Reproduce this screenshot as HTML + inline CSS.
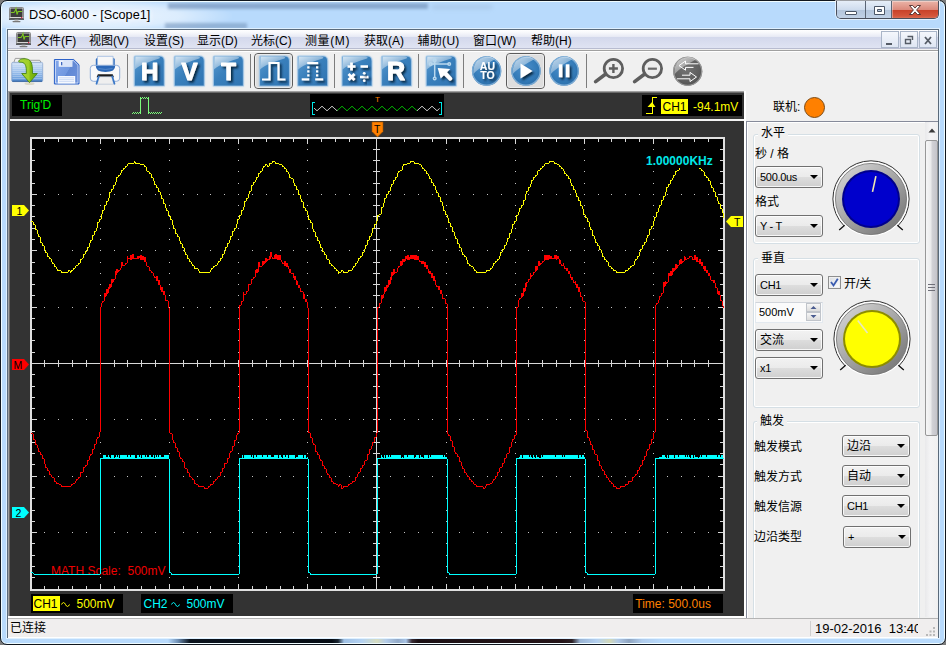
<!DOCTYPE html>
<html lang="zh-CN">
<head>
<meta charset="utf-8">
<title>DSO-6000 - [Scope1]</title>
<style>
html,body{margin:0;padding:0;}
body{width:946px;height:645px;overflow:hidden;position:relative;background:#7c7c7c;font-family:"Liberation Sans","Noto Sans CJK SC",sans-serif;font-size:12px;color:#000;}
.abs{position:absolute;}
#win{position:absolute;left:0;top:0;width:944px;height:643px;border:1px solid #10161e;border-radius:7px;background:#b8dafc;box-shadow:inset 0 0 0 1px #f0fcff;}
#title{left:29px;top:6px;font-size:12.700px;line-height:18px;color:#000;white-space:nowrap;text-shadow:0 0 6px #fff,0 0 6px #fff;}
#client{left:8px;top:30px;width:930px;height:607px;background:#f0f0f0;box-shadow:0 0 0 1px #5a6a7a,0 0 0 2px #dff0ff;}
/* menu */
#menubar{left:8px;top:30px;width:930px;height:19px;background:linear-gradient(#ffffff 0,#f6f7fb 3px,#e6e9f4 7px,#d3d8ec 7px,#dfe3f2 18px,#b8bcd0 18px,#b8bcd0 19px);border-bottom:1px solid #f0f0f0;box-shadow:0 1px 0 #a0a0a0,0 2px 0 #fff;}
.mi{position:absolute;top:32.500px;font-size:12px;line-height:16px;white-space:nowrap;color:#000;}
.mdib{top:31px;width:16px;height:15px;border:1px solid #a9b5c8;background:linear-gradient(#f4f7fc,#dfe6f3);}
/* toolbar */
#toolbar{left:8px;top:52px;width:930px;height:39px;background:#f0f0f0;}
.tsep{position:absolute;top:56px;width:1px;height:30px;background:#9a9a9a;}
/* scope */
#scope{left:8px;top:91px;width:736px;height:525px;background:#333333;border-left:1px solid #a0a0a0;border-top:1px solid #a0a0a0;box-sizing:border-box;box-shadow:inset 1px 1px 0 #696969;}
.blk{position:absolute;background:#000;}
.st{position:absolute;font-size:12px;line-height:14px;white-space:nowrap;}
/* right panel */
#rp{left:746px;top:91px;width:192px;height:527px;background:#f0f0f0;}
.cj{position:absolute;font-family:"Liberation Sans","Noto Sans CJK SC",sans-serif;font-size:12px;line-height:14px;white-space:nowrap;color:#000;}
.grp{position:absolute;border:1px solid #d5dfe5;border-radius:3px;box-shadow:inset 0 0 0 1px #fff;}
.combo{position:absolute;width:66px;height:20px;border:1px solid #707070;border-radius:3px;background:linear-gradient(#f2f2f2 0,#ebebeb 48%,#dddddd 52%,#cfcfcf 100%);box-shadow:inset 0 0 0 1px rgba(255,255,255,.8);font-size:11px;line-height:20px;letter-spacing:-0.3px;}
.cjc{font-size:12px;letter-spacing:0;}
.combo span{position:absolute;left:4px;top:0;white-space:nowrap;}
.combo i{position:absolute;right:4px;top:8px;width:0;height:0;border-left:4px solid transparent;border-right:4px solid transparent;border-top:4px solid #000;}
/* status */
#status{left:8px;top:618px;width:930px;height:18px;background:#f0eeee;border-top:1px solid #b4b4b4;box-shadow:0 1px 0 #fff;}
</style>
</head>
<body>
<div id="win"></div>
<div class="abs" style="left:2px;top:2px;width:942px;height:26px;overflow:hidden;border-radius:5px 5px 0 0">
<div class="abs" style="left:-10px;top:-4px;width:240px;height:36px;background:radial-gradient(ellipse at 40% 50%,rgba(255,255,255,.78) 0,rgba(255,255,255,.5) 45%,rgba(255,255,255,0) 72%)"></div>
<div class="abs" style="left:166px;top:1px;width:260px;height:6px;background:#6a88b0;opacity:.6;filter:blur(1.800px)"></div>
<div class="abs" style="left:163px;top:21px;width:82px;height:6px;background:#6a88b0;opacity:.5;filter:blur(1.800px)"></div>
<div class="abs" style="left:430px;top:3px;width:60px;height:4px;background:#8fa8c8;opacity:.35;filter:blur(2px)"></div>
</div>
<div class="abs" style="left:2px;top:638px;width:942px;height:5px;overflow:hidden;border-radius:0 0 5px 5px;background:linear-gradient(90deg,#b8dafc 0,#b8dafc 166px,#6f8fb4 176px,#0c141e 188px,#060c14 330px,#1a2632 336px,#9fc0e4 342px,#b4d2f2 360px,#d6dcc0 375px,#b4cce8 384px,#93aac8 396px,#a8c4e6 404px,#3a2c34 410px,#1c1014 416px,#241418 560px,#2c2024 570px,#9ab4d4 578px,#b4d0f0 595px,#d2d8b8 608px,#b0c8e6 616px,#8ea4c0 627px,#b0ccec 640px,#b8dafc 660px,#b8dafc 100%)"></div>
<div class="abs" style="left:8px;top:643px;width:930px;height:1px;background:#f0fcff"></div>
<svg class="abs" style="left:9px;top:6px" width="16" height="18" viewBox="0 0 16 18">
<rect x="0.5" y="1.5" width="14" height="11" rx="1" fill="#d8d8d8" stroke="#8a8a8a"/>
<rect x="1.5" y="2.5" width="12" height="8.5" fill="#3c3c3c"/>
<path d="M2 6.5h3l1-1.5 1-2.5 1 6 1-3h4" fill="none" stroke="#7cc520" stroke-width="1.1"/>
<rect x="0" y="12.5" width="15" height="1.2" fill="#222"/>
<rect x="12" y="11" width="1.3" height="1.3" fill="#e03050"/>
<rect x="5.5" y="13.7" width="4" height="1.5" fill="#bbb"/>
<rect x="3.5" y="15" width="8" height="1.2" rx="0.6" fill="#777"/>
</svg>
<div class="abs" style="left:836px;top:1px;width:103px;height:18px;border:1px solid #4a4f5c;border-top:none;border-radius:0 0 5px 5px;box-sizing:border-box;overflow:hidden;box-shadow:0 0 0 1px rgba(255,255,255,.6)">
 <div class="abs" style="left:0;top:0;width:28px;height:19px;background:linear-gradient(#e6eef8 0,#cfdced 45%,#b4c6dd 50%,#c4d4e8 100%);border-right:1px solid #5a6574"></div>
 <div class="abs" style="left:29px;top:0;width:25px;height:19px;background:linear-gradient(#e6eef8 0,#cfdced 45%,#b4c6dd 50%,#c4d4e8 100%);border-right:1px solid #5a6574"></div>
 <div class="abs" style="left:55px;top:0;width:48px;height:19px;box-shadow:inset 0 0 0 1px rgba(255,255,255,.35);background:linear-gradient(#eab4a8 0,#dc8a7c 45%,#c9432a 50%,#d4563c 80%,#e08a70 100%)"></div>
 <svg class="abs" style="left:0;top:0" width="102" height="19" viewBox="0 0 102 19">
  <rect x="8.5" y="10.5" width="11" height="3" rx="0.5" fill="#fff" stroke="#4a5566"/>
  <path d="M37.5 5.500h10v8h-10z M40.5 8.500h4v2h-4z" fill="#fff" stroke="#4a5566" fill-rule="evenodd"/>
  <path d="M72.500 4.500l3.200 0 2.300 2.600 2.300-2.600 3.200 0-3.900 4.500 3.900 4.500-3.200 0-2.300-2.600-2.300 2.600-3.200 0 3.900-4.500z" fill="#fff" stroke="#4a2a28" stroke-width="0.9"/>
 </svg>
</div>

<div id="title" class="abs">DSO-6000 - [Scope1]</div>
<div id="client" class="abs"></div>
<div id="menubar" class="abs"></div>
<svg class="abs" style="left:16px;top:31px" width="16" height="18" viewBox="0 0 16 18">
<rect x="0.500" y="1.500" width="14" height="11" rx="1" fill="#d8d8d8" stroke="#8a8a8a"/>
<rect x="1.500" y="2.500" width="12" height="8.500" fill="#3c3c3c"/>
<path d="M2 6.500h3l1-1.500 1-2.500 1 6 1-3h4" fill="none" stroke="#7cc520" stroke-width="1.100"/>
<rect x="0" y="12.500" width="15" height="1.200" fill="#222"/>
<rect x="12" y="11" width="1.300" height="1.300" fill="#e03050"/>
<rect x="5.500" y="13.700" width="4" height="1.500" fill="#bbb"/>
<rect x="3.500" y="15" width="8" height="1.200" rx="0.600" fill="#777"/>
</svg>
<div class="mi" style="left:37px">文件(F)</div>
<div class="mi" style="left:89px">视图(V)</div>
<div class="mi" style="left:144px">设置(S)</div>
<div class="mi" style="left:197px">显示(D)</div>
<div class="mi" style="left:251px">光标(C)</div>
<div class="mi" style="left:305px;letter-spacing:.6px">测量(M)</div>
<div class="mi" style="left:364px">获取(A)</div>
<div class="mi" style="left:417.500px;letter-spacing:.3px">辅助(U)</div>
<div class="mi" style="left:473px">窗口(W)</div>
<div class="mi" style="left:531px">帮助(H)</div>
<div class="abs mdib" style="left:881px"></div>
<div class="abs mdib" style="left:900px"></div>
<div class="abs mdib" style="left:919px"></div>
<svg class="abs" style="left:881px;top:31px" width="56" height="18" viewBox="0 0 56 18">
 <rect x="5" y="12" width="6" height="2" fill="#555c66"/>
 <path d="M26.500 5.500h5v3.500 M24.500 8.500h5v4h-5z" fill="none" stroke="#555c66" stroke-width="1.400"/>
 <path d="M44 6l6 7M50 6l-6 7" stroke="#555c66" stroke-width="1.800"/>
</svg>

<div id="toolbar" class="abs"></div>
<svg class="abs" style="left:8px;top:51px" width="930" height="41" viewBox="8 51 930 41">
<defs>
<linearGradient id="gb" x1="0" y1="0" x2="1" y2="1"><stop offset="0" stop-color="#5a9bd1"/><stop offset=".45" stop-color="#3a80bc"/><stop offset="1" stop-color="#2f74b2"/></linearGradient>
<linearGradient id="gg" x1="0" y1="0" x2=".8" y2="1"><stop offset="0" stop-color="#fff" stop-opacity=".75"/><stop offset="1" stop-color="#fff" stop-opacity=".12"/></linearGradient>
<radialGradient id="gc" cx=".45" cy=".4" r=".65"><stop offset="0" stop-color="#4a90cc"/><stop offset=".7" stop-color="#3279b6"/><stop offset="1" stop-color="#2b6ca6"/></radialGradient>
<radialGradient id="gcg" cx=".45" cy=".4" r=".65"><stop offset="0" stop-color="#747474"/><stop offset=".7" stop-color="#5e5e5e"/><stop offset="1" stop-color="#4e4e4e"/></radialGradient>
<filter id="bl1" x="-20%" y="-20%" width="140%" height="140%"><feGaussianBlur stdDeviation="1"/></filter>
<filter id="ds" x="-30%" y="-30%" width="170%" height="170%"><feDropShadow dx="1.9" dy="2.1" stdDeviation="1.2" flood-color="#061a36" flood-opacity=".9"/></filter>
<linearGradient id="gfold" x1="0" y1="0" x2="0" y2="1"><stop offset="0" stop-color="#d2e2f6"/><stop offset=".5" stop-color="#9cc0ec"/><stop offset="1" stop-color="#5a92d6"/></linearGradient>
<linearGradient id="garr" x1="0" y1="0" x2="1" y2="0"><stop offset="0" stop-color="#a8d438"/><stop offset=".55" stop-color="#a0d028"/><stop offset=".62" stop-color="#86bc10"/><stop offset="1" stop-color="#64a408"/></linearGradient>
<linearGradient id="gflop" x1="0" y1="0" x2="1" y2=".6"><stop offset="0" stop-color="#86a8ea"/><stop offset=".6" stop-color="#7098e0"/><stop offset=".62" stop-color="#6088d4"/><stop offset="1" stop-color="#6a90da"/></linearGradient>
</defs>
<g>
<path d="M13.800 62.500L15.300 58.400H24.800L25.800 60.300H39.800L41 62.500Z" fill="#f3f3f3" stroke="#8a8a8a" stroke-width=".8"/>
<rect x="11.700" y="62.300" width="31" height="19.300" rx="1.300" fill="url(#gfold)" stroke="#86a4cc" stroke-width=".7"/>
<path d="M12.500 64.500h29.400M12.500 66.500h29.400M12.500 68.500h29.400M12.500 70.500h29.400M12.500 72.500h29.400M12.500 74.500h29.400M12.500 76.500h29.400M12.500 78.500h29.400" stroke="#e4eefb" stroke-width=".6" opacity=".55"/>
<path d="M12.300 81.200h29.800" stroke="#2c5c9c" stroke-width="1.100"/>
<ellipse cx="29.500" cy="83.500" rx="5" ry="1.600" fill="#c8c4a8" opacity=".55"/>
<path d="M18.600 61.300C19 59.300 22 58.500 25 58.700C31.200 59.100 32.700 63 32.500 73.500L37.300 73.500L29.500 82.600L21.700 73.500L26.300 73.500C26.600 66.500 25.600 62.700 21.500 62.300C20 62.100 18.500 62.400 18.600 61.300Z" fill="url(#garr)" stroke="#3f7f0a" stroke-width=".8" stroke-linejoin="round"/>
</g>
<g>
<path d="M54.400 59.500h19.300l5.300 5.300v19.200h-24.600z" fill="url(#gflop)" stroke="#2d62c8" stroke-width="1"/>
<path d="M55.500 60.500h17.800l4.700 4.700v17.800h-22.500z" fill="none" stroke="#dfe9fb" stroke-width=".8" opacity=".9"/>
<path d="M58.700 60.200h13.600v6.600h-13.600z" fill="#eef3fc"/>
<path d="M64 60.200h8.300v6.600h-12z" fill="#d5e1f8" opacity=".8"/>
<path d="M61 62h1.300v3.300h-1.300z" fill="#3f68c0"/>
<path d="M57.900 76h17.300v7.400h-17.300z" fill="#f6f9fe"/>
<path d="M59 77.800h15M59 79.600h15M59 81.400h15" stroke="#c3d4f2" stroke-width=".8"/>
</g>
<g>
<path d="M95.800 59.500q0-1.500 1.500-1.500h16q1.500 0 1.500 1.500v7h-19z" fill="#3570c0"/>
<path d="M97.500 56.300h15.600v9.800h-15.600z" fill="#f7f7f7" stroke="#9ab8e0" stroke-width=".8"/>
<rect x="90.300" y="65.300" width="29.400" height="16" rx="3.200" fill="#f9f9fa" stroke="#86a6d6" stroke-width=".9"/>
<path d="M95.800 65.800h19.400q.3 6.200-9.700 6.200t-9.700-6.200z" fill="#2c68b8"/>
<path d="M98.500 68.600q7 1.600 14 0" fill="none" stroke="#6a98d4" stroke-width="1" opacity=".7"/>
<path d="M96.600 77.200l1.300-2.900h14.800l1.300 2.900z" fill="#1c1c1c"/>
<path d="M99.300 76.700h12.400l2 7.500h-16.400z" fill="#efefef" stroke="#aab8d0" stroke-width=".6"/>
<path d="M98.800 76.300l-2.300 7.500M112.200 76.300l2.300 7.500" stroke="#3a78c8" stroke-width="1.700" stroke-linecap="round"/>
</g>
<rect x="127" y="54" width="1" height="34" fill="#7d7d7d"/>
<path d="M135.3 56H159.3Q164.3 56 164.3 61V86H134.3V57Q134.3 56 135.3 56Z" fill="#9dc3e4" filter="url(#bl1)"/><path d="M135.3 56H159.3Q164.3 56 164.3 61V86H134.3V57Q134.3 56 135.3 56Z" fill="url(#gb)"/><path d="M135.3 56H159.3Q164.3 56 164.3 61V86H134.3V57Q134.3 56 135.3 56Z" fill="none" stroke="#a9cbe8" stroke-width="1.2" opacity=".75"/><path d="M135.3 56.5H157.3Q161.3 57 159.3 58.5C151.3 61 141.3 64 134.8 69.5Z" fill="url(#gg)"/>
<text x="149.60000000000002" y="79.5" font-size="24" font-weight="bold" text-anchor="middle" fill="#fff" stroke="#fff" stroke-width="1" stroke-linejoin="round" filter="url(#ds)" font-family="Liberation Sans, sans-serif">H</text>
<path d="M175.3 56H199.3Q204.3 56 204.3 61V86H174.3V57Q174.3 56 175.3 56Z" fill="#9dc3e4" filter="url(#bl1)"/><path d="M175.3 56H199.3Q204.3 56 204.3 61V86H174.3V57Q174.3 56 175.3 56Z" fill="url(#gb)"/><path d="M175.3 56H199.3Q204.3 56 204.3 61V86H174.3V57Q174.3 56 175.3 56Z" fill="none" stroke="#a9cbe8" stroke-width="1.2" opacity=".75"/><path d="M175.3 56.5H197.3Q201.3 57 199.3 58.5C191.3 61 181.3 64 174.8 69.5Z" fill="url(#gg)"/>
<text x="189.60000000000002" y="79.5" font-size="24" font-weight="bold" text-anchor="middle" fill="#fff" stroke="#fff" stroke-width="1" stroke-linejoin="round" filter="url(#ds)" font-family="Liberation Sans, sans-serif">V</text>
<path d="M214.4 56H238.4Q243.4 56 243.4 61V86H213.4V57Q213.4 56 214.4 56Z" fill="#9dc3e4" filter="url(#bl1)"/><path d="M214.4 56H238.4Q243.4 56 243.4 61V86H213.4V57Q213.4 56 214.4 56Z" fill="url(#gb)"/><path d="M214.4 56H238.4Q243.4 56 243.4 61V86H213.4V57Q213.4 56 214.4 56Z" fill="none" stroke="#a9cbe8" stroke-width="1.2" opacity=".75"/><path d="M214.4 56.5H236.4Q240.4 57 238.4 58.5C230.4 61 220.4 64 213.9 69.5Z" fill="url(#gg)"/>
<text x="228.70000000000002" y="79.5" font-size="24" font-weight="bold" text-anchor="middle" fill="#fff" stroke="#fff" stroke-width="1" stroke-linejoin="round" filter="url(#ds)" font-family="Liberation Sans, sans-serif">T</text>
<rect x="250" y="54" width="1" height="34" fill="#7d7d7d"/>
<rect x="254.5" y="53.5" width="38" height="35" rx="3.5" fill="#dedede" stroke="#5c5c5c"/><rect x="255.5" y="54.5" width="36" height="33" rx="2.5" fill="none" stroke="#f4f4f4" opacity=".7"/>
<path d="M260.5 56H284.5Q289.5 56 289.5 61V86H259.5V57Q259.5 56 260.5 56Z" fill="#9dc3e4" filter="url(#bl1)"/><path d="M260.5 56H284.5Q289.5 56 289.5 61V86H259.5V57Q259.5 56 260.5 56Z" fill="url(#gb)"/><path d="M260.5 56H284.5Q289.5 56 289.5 61V86H259.5V57Q259.5 56 260.5 56Z" fill="none" stroke="#a9cbe8" stroke-width="1.2" opacity=".75"/><path d="M260.5 56.5H282.5Q286.5 57 284.5 58.5C276.5 61 266.5 64 260.0 69.5Z" fill="url(#gg)"/>
<path d="M262.0 79.5h7.500v-16.500h9v16.500h7" fill="none" stroke="#fff" stroke-width="2.200" filter="url(#ds)"/>
<path d="M298.7 56H322.7Q327.7 56 327.7 61V86H297.7V57Q297.7 56 298.7 56Z" fill="#9dc3e4" filter="url(#bl1)"/><path d="M298.7 56H322.7Q327.7 56 327.7 61V86H297.7V57Q297.7 56 298.7 56Z" fill="url(#gb)"/><path d="M298.7 56H322.7Q327.7 56 327.7 61V86H297.7V57Q297.7 56 298.7 56Z" fill="none" stroke="#a9cbe8" stroke-width="1.2" opacity=".75"/><path d="M298.7 56.5H320.7Q324.7 57 322.7 58.5C314.7 61 304.7 64 298.2 69.5Z" fill="url(#gg)"/>
<g filter="url(#ds)" fill="#fff"><rect x="307.2" y="62" width="11" height="2.200"/><rect x="301.7" y="78.300" width="7.500" height="2.200"/><rect x="315.2" y="78.300" width="8" height="2.200"/><rect x="307.2" y="66.3" width="2.200" height="2.200"/><rect x="316.0" y="66.3" width="2.200" height="2.200"/><rect x="307.2" y="70.3" width="2.200" height="2.200"/><rect x="316.0" y="70.3" width="2.200" height="2.200"/><rect x="307.2" y="74.3" width="2.200" height="2.200"/><rect x="316.0" y="74.3" width="2.200" height="2.200"/></g>
<rect x="334" y="54" width="1" height="34" fill="#7d7d7d"/>
<path d="M343 56H367Q372 56 372 61V86H342V57Q342 56 343 56Z" fill="#9dc3e4" filter="url(#bl1)"/><path d="M343 56H367Q372 56 372 61V86H342V57Q342 56 343 56Z" fill="url(#gb)"/><path d="M343 56H367Q372 56 372 61V86H342V57Q342 56 343 56Z" fill="none" stroke="#a9cbe8" stroke-width="1.2" opacity=".75"/><path d="M343 56.5H365Q369 57 367 58.5C359 61 349 64 342.5 69.5Z" fill="url(#gg)"/>
<g filter="url(#ds)" stroke="#fff" stroke-width="2.700" fill="#fff"><path d="M347.5 66.500h8M351.5 62.500v8M360.5 66.500h7.500M348.5 74l6 6M354.5 74l-6 6M360 77h8.500"/></g><g filter="url(#ds)" fill="#fff"><circle cx="364.2" cy="73.300" r="1.400"/><circle cx="364.2" cy="80.700" r="1.400"/></g>
<path d="M382.5 56H406.5Q411.5 56 411.5 61V86H381.5V57Q381.5 56 382.5 56Z" fill="#9dc3e4" filter="url(#bl1)"/><path d="M382.5 56H406.5Q411.5 56 411.5 61V86H381.5V57Q381.5 56 382.5 56Z" fill="url(#gb)"/><path d="M382.5 56H406.5Q411.5 56 411.5 61V86H381.5V57Q381.5 56 382.5 56Z" fill="none" stroke="#a9cbe8" stroke-width="1.2" opacity=".75"/><path d="M382.5 56.5H404.5Q408.5 57 406.5 58.5C398.5 61 388.5 64 382.0 69.5Z" fill="url(#gg)"/>
<text x="396.1" y="80" font-size="25" font-weight="bold" text-anchor="middle" fill="#fff" stroke="#fff" stroke-width="1" stroke-linejoin="round" filter="url(#ds)" font-family="Liberation Sans, sans-serif">R</text>
<rect x="418" y="54" width="1" height="34" fill="#7d7d7d"/>
<path d="M427.2 56H451.2Q456.2 56 456.2 61V86H426.2V57Q426.2 56 427.2 56Z" fill="#9dc3e4" filter="url(#bl1)"/><path d="M427.2 56H451.2Q456.2 56 456.2 61V86H426.2V57Q426.2 56 427.2 56Z" fill="url(#gb)"/><path d="M427.2 56H451.2Q456.2 56 456.2 61V86H426.2V57Q426.2 56 427.2 56Z" fill="none" stroke="#a9cbe8" stroke-width="1.2" opacity=".75"/><path d="M427.2 56.5H449.2Q453.2 57 451.2 58.5C443.2 61 433.2 64 426.7 69.5Z" fill="url(#gg)"/>
<g fill="none" stroke="#b9d8ee" stroke-width="1.500"><path d="M434.7 60.500v17.500M431.2 64h17.500"/><circle cx="434.7" cy="60.300" r="1.300"/><circle cx="434.7" cy="78.500" r="1.300"/><circle cx="430.5" cy="64" r="1.300"/><circle cx="449.2" cy="64" r="1.300"/></g>
<path d="M437.7 68l12.500 1-3.200 3.200 5 5.500q.8 1.200-.4 2.400t-2.400 .400l-5.200-5.300-3.300 3.300z" fill="#fff" filter="url(#ds)"/>
<rect x="463" y="54" width="1" height="34" fill="#7d7d7d"/>
<circle cx="486.6" cy="71" r="14.7" fill="url(#gc)"/><circle cx="486.6" cy="71" r="14.1" fill="none" stroke="#8db9de" stroke-width="1.2" opacity=".8"/><path d="M473.40000000000003 70A13.7 13.7 0 0 1 494.685 59.24C488.6 62.915 478.51500000000004 68 473.40000000000003 74Z" fill="url(#gg)"/>
<g filter="url(#ds)" font-family="Liberation Sans, sans-serif" font-weight="bold" font-size="10.500" fill="#fff" text-anchor="middle"><text x="487.400" y="70">AU</text><text x="487.400" y="78.800">TO</text></g>
<rect x="506.5" y="53.5" width="38" height="35" rx="3.5" fill="#dedede" stroke="#5c5c5c"/><rect x="507.5" y="54.5" width="36" height="33" rx="2.5" fill="none" stroke="#f4f4f4" opacity=".7"/>
<circle cx="526" cy="71" r="14.7" fill="url(#gc)"/><circle cx="526" cy="71" r="14.1" fill="none" stroke="#8db9de" stroke-width="1.2" opacity=".8"/><path d="M512.8 70A13.7 13.7 0 0 1 534.085 59.24C528 62.915 517.915 68 512.8 74Z" fill="url(#gg)"/>
<path d="M520.500 63.500l12 7.500-12 7.500z" fill="#fff" filter="url(#ds)"/>
<circle cx="564.1" cy="71" r="14.7" fill="url(#gc)"/><circle cx="564.1" cy="71" r="14.1" fill="none" stroke="#8db9de" stroke-width="1.2" opacity=".8"/><path d="M550.9 70A13.7 13.7 0 0 1 572.1850000000001 59.24C566.1 62.915 556.015 68 550.9 74Z" fill="url(#gg)"/>
<g filter="url(#ds)" fill="#fff"><rect x="558.800" y="64.300" width="3.600" height="13"/><rect x="565.800" y="64.300" width="3.600" height="13"/></g>
<rect x="586" y="54" width="1" height="34" fill="#7d7d7d"/>
<path d="M606.4 73.5L595.6 81.6" stroke="#5e5e5e" stroke-width="3.600" stroke-linecap="round"/>
<circle cx="613.4" cy="68.500" r="9.200" fill="#ececec" stroke="#5e5e5e" stroke-width="2.800"/>
<path d="M608.9 68.500h9M613.4 64v9" stroke="#5e5e5e" stroke-width="2.400"/>
<path d="M645.4 73.5L634.6 81.6" stroke="#5e5e5e" stroke-width="3.600" stroke-linecap="round"/>
<circle cx="652.4" cy="68.500" r="9.200" fill="#ececec" stroke="#5e5e5e" stroke-width="2.800"/>
<path d="M647.9 68.700h9" stroke="#6a6a6a" stroke-width="2.200"/>
<circle cx="687.7" cy="71.3" r="14.6" fill="url(#gcg)"/><circle cx="687.7" cy="71.3" r="14.0" fill="none" stroke="#a8a8a8" stroke-width="1.2" opacity=".8"/><path d="M674.6 70.3A13.6 13.6 0 0 1 695.73 59.62C689.7 63.269999999999996 679.6700000000001 68.3 674.6 74.3Z" fill="url(#gg)"/>
<g fill="none" stroke="#fff" stroke-width="1" stroke-linejoin="miter"><path d="M698.500 63.800h-13v-2.800l-6.500 4.600 6.500 4.600v-2.800h8"/><path d="M677 78.800h13v2.800l6.500-4.600-6.500-4.600v2.800h-8"/></g>
</svg>
<div id="scope" class="abs"></div>
<div class="blk" style="left:12px;top:95px;width:50px;height:21px"></div>
<div class="st" style="left:20px;top:98px;color:#00f000">Trig'D</div>
<svg class="abs" style="left:9px;top:93px" width="737" height="30" viewBox="9 93 737 30" shape-rendering="crispEdges">
<path d="M132 113h1v1h-1zM133 112h1v1h-1zM134 113h1v1h-1zM135 112h1v1h-1zM136 113h1v1h-1zM137 112h1v1h-1zM138 113h1v1h-1zM139 112h1v1h-1zM140 97h1v17h-1zM141 98h1v1h-1zM142 97h1v1h-1zM143 98h1v1h-1zM144 97h1v1h-1zM145 98h1v1h-1zM146 97h1v1h-1zM147 98h1v1h-1zM148 97h1v17h-1zM149 112h1v1h-1zM150 113h1v1h-1zM151 112h1v1h-1zM152 113h1v1h-1zM153 112h1v1h-1zM154 113h1v1h-1zM155 112h1v1h-1zM156 113h1v1h-1zM157 112h1v1h-1zM158 113h1v1h-1zM159 112h1v1h-1zM160 113h1v1h-1zM161 112h1v1h-1z" fill="#7cfc7c"/>
<rect x="310" y="94" width="134" height="23" fill="#000"/>
<path d="M312 102h3v1h-2v11h2v1h-3zM439 102h3v13h-3v-1h2v-11h-2z" fill="#00e8e8"/>
<g shape-rendering="auto" fill="none" stroke-width="1"><path d="M314 108.04L314.5 108.50L315.0 108.96L315.5 109.42L316.0 109.88L316.5 110.34L317.0 110.80L317.5 110.34L318.0 109.88L318.5 109.42L319.0 108.96L319.5 108.50L320.0 108.04L320.5 107.58L321.0 107.12L321.5 106.66L322.0 106.20L322.5 106.66L323.0 107.12L323.5 107.58L324.0 108.04L324.5 108.50L325.0 108.96L325.5 109.42L326.0 109.88L326.5 110.34L327.0 110.80L327.5 110.34L328.0 109.88L328.5 109.42L329.0 108.96L329.5 108.50L330.0 108.04L330.5 107.58L331.0 107.12L331.5 106.66L332.0 106.20L332.5 106.66L333.0 107.12L333.5 107.58L334.0 108.04L334.5 108.50L335.0 108.96L335.5 109.42L336.0 109.88L336.5 110.34L337.0 110.80L337.5 110.34" stroke="#fff"/><path d="M337.5 110.34L338.0 109.88L338.5 109.42L339.0 108.96L339.5 108.50L340.0 108.04L340.5 107.58L341.0 107.12L341.5 106.66L342.0 106.20L342.5 106.66L343.0 107.12L343.5 107.58L344.0 108.04L344.5 108.50L345.0 108.96L345.5 109.42L346.0 109.88L346.5 110.34L347.0 110.80L347.5 110.34L348.0 109.88L348.5 109.42L349.0 108.96L349.5 108.50L350.0 108.04L350.5 107.58L351.0 107.12L351.5 106.66L352.0 106.20L352.5 106.66L353.0 107.12L353.5 107.58L354.0 108.04L354.5 108.50L355.0 108.96L355.5 109.42L356.0 109.88L356.5 110.34L357.0 110.80L357.5 110.34L358.0 109.88L358.5 109.42L359.0 108.96L359.5 108.50L360.0 108.04L360.5 107.58L361.0 107.12L361.5 106.66L362.0 106.20L362.5 106.66L363.0 107.12L363.5 107.58L364.0 108.04L364.5 108.50L365.0 108.96L365.5 109.42L366.0 109.88L366.5 110.34L367.0 110.80L367.5 110.34L368.0 109.88L368.5 109.42L369.0 108.96L369.5 108.50L370.0 108.04L370.5 107.58L371.0 107.12L371.5 106.66L372.0 106.20L372.5 106.66L373.0 107.12L373.5 107.58L374.0 108.04L374.5 108.50L375.0 108.96L375.5 109.42L376.0 109.88L376.5 110.34L377.0 110.80L377.5 110.34L378.0 109.88L378.5 109.42L379.0 108.96L379.5 108.50L380.0 108.04L380.5 107.58L381.0 107.12L381.5 106.66L382.0 106.20L382.5 106.66L383.0 107.12L383.5 107.58L384.0 108.04L384.5 108.50L385.0 108.96L385.5 109.42L386.0 109.88L386.5 110.34L387.0 110.80L387.5 110.34L388.0 109.88L388.5 109.42L389.0 108.96L389.5 108.50L390.0 108.04L390.5 107.58L391.0 107.12L391.5 106.66L392.0 106.20L392.5 106.66L393.0 107.12L393.5 107.58L394.0 108.04L394.5 108.50L395.0 108.96L395.5 109.42L396.0 109.88L396.5 110.34L397.0 110.80L397.5 110.34L398.0 109.88L398.5 109.42L399.0 108.96L399.5 108.50L400.0 108.04L400.5 107.58L401.0 107.12L401.5 106.66L402.0 106.20L402.5 106.66L403.0 107.12L403.5 107.58L404.0 108.04L404.5 108.50L405.0 108.96L405.5 109.42L406.0 109.88L406.5 110.34L407.0 110.80L407.5 110.34L408.0 109.88L408.5 109.42L409.0 108.96L409.5 108.50L410.0 108.04L410.5 107.58L411.0 107.12L411.5 106.66L412.0 106.20L412.5 106.66L413.0 107.12L413.5 107.58L414.0 108.04L414.5 108.50L415.0 108.96L415.5 109.42L416.0 109.88L416.5 110.34L417.0 110.80" stroke="#00e400"/><path d="M417 110.80L417.5 110.34L418.0 109.88L418.5 109.42L419.0 108.96L419.5 108.50L420.0 108.04L420.5 107.58L421.0 107.12L421.5 106.66L422.0 106.20L422.5 106.66L423.0 107.12L423.5 107.58L424.0 108.04L424.5 108.50L425.0 108.96L425.5 109.42L426.0 109.88L426.5 110.34L427.0 110.80L427.5 110.34L428.0 109.88L428.5 109.42L429.0 108.96L429.5 108.50L430.0 108.04L430.5 107.58L431.0 107.12L431.5 106.66L432.0 106.20L432.5 106.66L433.0 107.12L433.5 107.58L434.0 108.04L434.5 108.50L435.0 108.96L435.5 109.42L436.0 109.88L436.5 110.34L437.0 110.80L437.5 110.34L438.0 109.88L438.5 109.42L439.0 108.96L439.5 108.50" stroke="#fff"/></g>
<rect x="10" y="119" width="734" height="2" fill="#f4f4f4"/>
<rect x="642" y="95" width="100" height="21" fill="#000"/>
<path d="M646 113h6v-16h5v1h-4v16h-7zM652 102l3.500 5h-8z" fill="#ffff00" shape-rendering="auto"/>
<rect x="661" y="99" width="27" height="15" fill="#ffff00"/>
</svg>
<div class="st" style="left:375px;top:94.500px;font-size:8px;line-height:10px;color:#ff8000">T</div>
<div class="st" style="left:662.500px;top:100px;color:#000">CH1</div>
<div class="st" style="left:693px;top:100px;color:#ffff00">-94.1mV</div>
<svg width="737" height="524" viewBox="9 93 737 524" style="position:absolute;left:9px;top:93px" shape-rendering="crispEdges">
<rect x="30" y="137" width="695" height="454" fill="#e0e0e0"/>
<rect x="32" y="139" width="691" height="450" fill="#000"/>
<path d="M100 149h1v1h-1zM100 160h1v1h-1zM100 171h1v1h-1zM100 183h1v1h-1zM100 194h1v1h-1zM100 205h1v1h-1zM100 216h1v1h-1zM100 228h1v1h-1zM100 239h1v1h-1zM100 250h1v1h-1zM100 262h1v1h-1zM100 273h1v1h-1zM100 284h1v1h-1zM100 295h1v1h-1zM100 307h1v1h-1zM100 318h1v1h-1zM100 329h1v1h-1zM100 340h1v1h-1zM100 352h1v1h-1zM100 363h1v1h-1zM100 374h1v1h-1zM100 386h1v1h-1zM100 397h1v1h-1zM100 408h1v1h-1zM100 419h1v1h-1zM100 431h1v1h-1zM100 442h1v1h-1zM100 453h1v1h-1zM100 464h1v1h-1zM100 476h1v1h-1zM100 487h1v1h-1zM100 498h1v1h-1zM100 510h1v1h-1zM100 521h1v1h-1zM100 532h1v1h-1zM100 543h1v1h-1zM100 555h1v1h-1zM100 566h1v1h-1zM100 577h1v1h-1zM169 149h1v1h-1zM169 160h1v1h-1zM169 171h1v1h-1zM169 183h1v1h-1zM169 194h1v1h-1zM169 205h1v1h-1zM169 216h1v1h-1zM169 228h1v1h-1zM169 239h1v1h-1zM169 250h1v1h-1zM169 262h1v1h-1zM169 273h1v1h-1zM169 284h1v1h-1zM169 295h1v1h-1zM169 307h1v1h-1zM169 318h1v1h-1zM169 329h1v1h-1zM169 340h1v1h-1zM169 352h1v1h-1zM169 363h1v1h-1zM169 374h1v1h-1zM169 386h1v1h-1zM169 397h1v1h-1zM169 408h1v1h-1zM169 419h1v1h-1zM169 431h1v1h-1zM169 442h1v1h-1zM169 453h1v1h-1zM169 464h1v1h-1zM169 476h1v1h-1zM169 487h1v1h-1zM169 498h1v1h-1zM169 510h1v1h-1zM169 521h1v1h-1zM169 532h1v1h-1zM169 543h1v1h-1zM169 555h1v1h-1zM169 566h1v1h-1zM169 577h1v1h-1zM238 149h1v1h-1zM238 160h1v1h-1zM238 171h1v1h-1zM238 183h1v1h-1zM238 194h1v1h-1zM238 205h1v1h-1zM238 216h1v1h-1zM238 228h1v1h-1zM238 239h1v1h-1zM238 250h1v1h-1zM238 262h1v1h-1zM238 273h1v1h-1zM238 284h1v1h-1zM238 295h1v1h-1zM238 307h1v1h-1zM238 318h1v1h-1zM238 329h1v1h-1zM238 340h1v1h-1zM238 352h1v1h-1zM238 363h1v1h-1zM238 374h1v1h-1zM238 386h1v1h-1zM238 397h1v1h-1zM238 408h1v1h-1zM238 419h1v1h-1zM238 431h1v1h-1zM238 442h1v1h-1zM238 453h1v1h-1zM238 464h1v1h-1zM238 476h1v1h-1zM238 487h1v1h-1zM238 498h1v1h-1zM238 510h1v1h-1zM238 521h1v1h-1zM238 532h1v1h-1zM238 543h1v1h-1zM238 555h1v1h-1zM238 566h1v1h-1zM238 577h1v1h-1zM307 149h1v1h-1zM307 160h1v1h-1zM307 171h1v1h-1zM307 183h1v1h-1zM307 194h1v1h-1zM307 205h1v1h-1zM307 216h1v1h-1zM307 228h1v1h-1zM307 239h1v1h-1zM307 250h1v1h-1zM307 262h1v1h-1zM307 273h1v1h-1zM307 284h1v1h-1zM307 295h1v1h-1zM307 307h1v1h-1zM307 318h1v1h-1zM307 329h1v1h-1zM307 340h1v1h-1zM307 352h1v1h-1zM307 363h1v1h-1zM307 374h1v1h-1zM307 386h1v1h-1zM307 397h1v1h-1zM307 408h1v1h-1zM307 419h1v1h-1zM307 431h1v1h-1zM307 442h1v1h-1zM307 453h1v1h-1zM307 464h1v1h-1zM307 476h1v1h-1zM307 487h1v1h-1zM307 498h1v1h-1zM307 510h1v1h-1zM307 521h1v1h-1zM307 532h1v1h-1zM307 543h1v1h-1zM307 555h1v1h-1zM307 566h1v1h-1zM307 577h1v1h-1zM446 149h1v1h-1zM446 160h1v1h-1zM446 171h1v1h-1zM446 183h1v1h-1zM446 194h1v1h-1zM446 205h1v1h-1zM446 216h1v1h-1zM446 228h1v1h-1zM446 239h1v1h-1zM446 250h1v1h-1zM446 262h1v1h-1zM446 273h1v1h-1zM446 284h1v1h-1zM446 295h1v1h-1zM446 307h1v1h-1zM446 318h1v1h-1zM446 329h1v1h-1zM446 340h1v1h-1zM446 352h1v1h-1zM446 363h1v1h-1zM446 374h1v1h-1zM446 386h1v1h-1zM446 397h1v1h-1zM446 408h1v1h-1zM446 419h1v1h-1zM446 431h1v1h-1zM446 442h1v1h-1zM446 453h1v1h-1zM446 464h1v1h-1zM446 476h1v1h-1zM446 487h1v1h-1zM446 498h1v1h-1zM446 510h1v1h-1zM446 521h1v1h-1zM446 532h1v1h-1zM446 543h1v1h-1zM446 555h1v1h-1zM446 566h1v1h-1zM446 577h1v1h-1zM515 149h1v1h-1zM515 160h1v1h-1zM515 171h1v1h-1zM515 183h1v1h-1zM515 194h1v1h-1zM515 205h1v1h-1zM515 216h1v1h-1zM515 228h1v1h-1zM515 239h1v1h-1zM515 250h1v1h-1zM515 262h1v1h-1zM515 273h1v1h-1zM515 284h1v1h-1zM515 295h1v1h-1zM515 307h1v1h-1zM515 318h1v1h-1zM515 329h1v1h-1zM515 340h1v1h-1zM515 352h1v1h-1zM515 363h1v1h-1zM515 374h1v1h-1zM515 386h1v1h-1zM515 397h1v1h-1zM515 408h1v1h-1zM515 419h1v1h-1zM515 431h1v1h-1zM515 442h1v1h-1zM515 453h1v1h-1zM515 464h1v1h-1zM515 476h1v1h-1zM515 487h1v1h-1zM515 498h1v1h-1zM515 510h1v1h-1zM515 521h1v1h-1zM515 532h1v1h-1zM515 543h1v1h-1zM515 555h1v1h-1zM515 566h1v1h-1zM515 577h1v1h-1zM584 149h1v1h-1zM584 160h1v1h-1zM584 171h1v1h-1zM584 183h1v1h-1zM584 194h1v1h-1zM584 205h1v1h-1zM584 216h1v1h-1zM584 228h1v1h-1zM584 239h1v1h-1zM584 250h1v1h-1zM584 262h1v1h-1zM584 273h1v1h-1zM584 284h1v1h-1zM584 295h1v1h-1zM584 307h1v1h-1zM584 318h1v1h-1zM584 329h1v1h-1zM584 340h1v1h-1zM584 352h1v1h-1zM584 363h1v1h-1zM584 374h1v1h-1zM584 386h1v1h-1zM584 397h1v1h-1zM584 408h1v1h-1zM584 419h1v1h-1zM584 431h1v1h-1zM584 442h1v1h-1zM584 453h1v1h-1zM584 464h1v1h-1zM584 476h1v1h-1zM584 487h1v1h-1zM584 498h1v1h-1zM584 510h1v1h-1zM584 521h1v1h-1zM584 532h1v1h-1zM584 543h1v1h-1zM584 555h1v1h-1zM584 566h1v1h-1zM584 577h1v1h-1zM653 149h1v1h-1zM653 160h1v1h-1zM653 171h1v1h-1zM653 183h1v1h-1zM653 194h1v1h-1zM653 205h1v1h-1zM653 216h1v1h-1zM653 228h1v1h-1zM653 239h1v1h-1zM653 250h1v1h-1zM653 262h1v1h-1zM653 273h1v1h-1zM653 284h1v1h-1zM653 295h1v1h-1zM653 307h1v1h-1zM653 318h1v1h-1zM653 329h1v1h-1zM653 340h1v1h-1zM653 352h1v1h-1zM653 363h1v1h-1zM653 374h1v1h-1zM653 386h1v1h-1zM653 397h1v1h-1zM653 408h1v1h-1zM653 419h1v1h-1zM653 431h1v1h-1zM653 442h1v1h-1zM653 453h1v1h-1zM653 464h1v1h-1zM653 476h1v1h-1zM653 487h1v1h-1zM653 498h1v1h-1zM653 510h1v1h-1zM653 521h1v1h-1zM653 532h1v1h-1zM653 543h1v1h-1zM653 555h1v1h-1zM653 566h1v1h-1zM653 577h1v1h-1zM44 194h1v1h-1zM58 194h1v1h-1zM72 194h1v1h-1zM86 194h1v1h-1zM114 194h1v1h-1zM127 194h1v1h-1zM141 194h1v1h-1zM155 194h1v1h-1zM183 194h1v1h-1zM197 194h1v1h-1zM210 194h1v1h-1zM224 194h1v1h-1zM252 194h1v1h-1zM266 194h1v1h-1zM280 194h1v1h-1zM293 194h1v1h-1zM321 194h1v1h-1zM335 194h1v1h-1zM349 194h1v1h-1zM363 194h1v1h-1zM390 194h1v1h-1zM404 194h1v1h-1zM418 194h1v1h-1zM432 194h1v1h-1zM459 194h1v1h-1zM473 194h1v1h-1zM487 194h1v1h-1zM501 194h1v1h-1zM528 194h1v1h-1zM542 194h1v1h-1zM556 194h1v1h-1zM570 194h1v1h-1zM598 194h1v1h-1zM611 194h1v1h-1zM625 194h1v1h-1zM639 194h1v1h-1zM667 194h1v1h-1zM681 194h1v1h-1zM694 194h1v1h-1zM708 194h1v1h-1zM44 250h1v1h-1zM58 250h1v1h-1zM72 250h1v1h-1zM86 250h1v1h-1zM114 250h1v1h-1zM127 250h1v1h-1zM141 250h1v1h-1zM155 250h1v1h-1zM183 250h1v1h-1zM197 250h1v1h-1zM210 250h1v1h-1zM224 250h1v1h-1zM252 250h1v1h-1zM266 250h1v1h-1zM280 250h1v1h-1zM293 250h1v1h-1zM321 250h1v1h-1zM335 250h1v1h-1zM349 250h1v1h-1zM363 250h1v1h-1zM390 250h1v1h-1zM404 250h1v1h-1zM418 250h1v1h-1zM432 250h1v1h-1zM459 250h1v1h-1zM473 250h1v1h-1zM487 250h1v1h-1zM501 250h1v1h-1zM528 250h1v1h-1zM542 250h1v1h-1zM556 250h1v1h-1zM570 250h1v1h-1zM598 250h1v1h-1zM611 250h1v1h-1zM625 250h1v1h-1zM639 250h1v1h-1zM667 250h1v1h-1zM681 250h1v1h-1zM694 250h1v1h-1zM708 250h1v1h-1zM44 307h1v1h-1zM58 307h1v1h-1zM72 307h1v1h-1zM86 307h1v1h-1zM114 307h1v1h-1zM127 307h1v1h-1zM141 307h1v1h-1zM155 307h1v1h-1zM183 307h1v1h-1zM197 307h1v1h-1zM210 307h1v1h-1zM224 307h1v1h-1zM252 307h1v1h-1zM266 307h1v1h-1zM280 307h1v1h-1zM293 307h1v1h-1zM321 307h1v1h-1zM335 307h1v1h-1zM349 307h1v1h-1zM363 307h1v1h-1zM390 307h1v1h-1zM404 307h1v1h-1zM418 307h1v1h-1zM432 307h1v1h-1zM459 307h1v1h-1zM473 307h1v1h-1zM487 307h1v1h-1zM501 307h1v1h-1zM528 307h1v1h-1zM542 307h1v1h-1zM556 307h1v1h-1zM570 307h1v1h-1zM598 307h1v1h-1zM611 307h1v1h-1zM625 307h1v1h-1zM639 307h1v1h-1zM667 307h1v1h-1zM681 307h1v1h-1zM694 307h1v1h-1zM708 307h1v1h-1zM44 419h1v1h-1zM58 419h1v1h-1zM72 419h1v1h-1zM86 419h1v1h-1zM114 419h1v1h-1zM127 419h1v1h-1zM141 419h1v1h-1zM155 419h1v1h-1zM183 419h1v1h-1zM197 419h1v1h-1zM210 419h1v1h-1zM224 419h1v1h-1zM252 419h1v1h-1zM266 419h1v1h-1zM280 419h1v1h-1zM293 419h1v1h-1zM321 419h1v1h-1zM335 419h1v1h-1zM349 419h1v1h-1zM363 419h1v1h-1zM390 419h1v1h-1zM404 419h1v1h-1zM418 419h1v1h-1zM432 419h1v1h-1zM459 419h1v1h-1zM473 419h1v1h-1zM487 419h1v1h-1zM501 419h1v1h-1zM528 419h1v1h-1zM542 419h1v1h-1zM556 419h1v1h-1zM570 419h1v1h-1zM598 419h1v1h-1zM611 419h1v1h-1zM625 419h1v1h-1zM639 419h1v1h-1zM667 419h1v1h-1zM681 419h1v1h-1zM694 419h1v1h-1zM708 419h1v1h-1zM44 476h1v1h-1zM58 476h1v1h-1zM72 476h1v1h-1zM86 476h1v1h-1zM114 476h1v1h-1zM127 476h1v1h-1zM141 476h1v1h-1zM155 476h1v1h-1zM183 476h1v1h-1zM197 476h1v1h-1zM210 476h1v1h-1zM224 476h1v1h-1zM252 476h1v1h-1zM266 476h1v1h-1zM280 476h1v1h-1zM293 476h1v1h-1zM321 476h1v1h-1zM335 476h1v1h-1zM349 476h1v1h-1zM363 476h1v1h-1zM390 476h1v1h-1zM404 476h1v1h-1zM418 476h1v1h-1zM432 476h1v1h-1zM459 476h1v1h-1zM473 476h1v1h-1zM487 476h1v1h-1zM501 476h1v1h-1zM528 476h1v1h-1zM542 476h1v1h-1zM556 476h1v1h-1zM570 476h1v1h-1zM598 476h1v1h-1zM611 476h1v1h-1zM625 476h1v1h-1zM639 476h1v1h-1zM667 476h1v1h-1zM681 476h1v1h-1zM694 476h1v1h-1zM708 476h1v1h-1zM44 532h1v1h-1zM58 532h1v1h-1zM72 532h1v1h-1zM86 532h1v1h-1zM114 532h1v1h-1zM127 532h1v1h-1zM141 532h1v1h-1zM155 532h1v1h-1zM183 532h1v1h-1zM197 532h1v1h-1zM210 532h1v1h-1zM224 532h1v1h-1zM252 532h1v1h-1zM266 532h1v1h-1zM280 532h1v1h-1zM293 532h1v1h-1zM321 532h1v1h-1zM335 532h1v1h-1zM349 532h1v1h-1zM363 532h1v1h-1zM390 532h1v1h-1zM404 532h1v1h-1zM418 532h1v1h-1zM432 532h1v1h-1zM459 532h1v1h-1zM473 532h1v1h-1zM487 532h1v1h-1zM501 532h1v1h-1zM528 532h1v1h-1zM542 532h1v1h-1zM556 532h1v1h-1zM570 532h1v1h-1zM598 532h1v1h-1zM611 532h1v1h-1zM625 532h1v1h-1zM639 532h1v1h-1zM667 532h1v1h-1zM681 532h1v1h-1zM694 532h1v1h-1zM708 532h1v1h-1z" fill="#c4c4c4"/>
<path d="M44 139h1v3h-1zM44 586h1v3h-1zM44 360h1v7h-1zM58 139h1v3h-1zM58 586h1v3h-1zM58 360h1v7h-1zM72 139h1v3h-1zM72 586h1v3h-1zM72 360h1v7h-1zM86 139h1v3h-1zM86 586h1v3h-1zM86 360h1v7h-1zM100 139h1v5h-1zM100 584h1v5h-1zM100 360h1v7h-1zM114 139h1v3h-1zM114 586h1v3h-1zM114 360h1v7h-1zM127 139h1v3h-1zM127 586h1v3h-1zM127 360h1v7h-1zM141 139h1v3h-1zM141 586h1v3h-1zM141 360h1v7h-1zM155 139h1v3h-1zM155 586h1v3h-1zM155 360h1v7h-1zM169 139h1v5h-1zM169 584h1v5h-1zM169 360h1v7h-1zM183 139h1v3h-1zM183 586h1v3h-1zM183 360h1v7h-1zM197 139h1v3h-1zM197 586h1v3h-1zM197 360h1v7h-1zM210 139h1v3h-1zM210 586h1v3h-1zM210 360h1v7h-1zM224 139h1v3h-1zM224 586h1v3h-1zM224 360h1v7h-1zM238 139h1v5h-1zM238 584h1v5h-1zM238 360h1v7h-1zM252 139h1v3h-1zM252 586h1v3h-1zM252 360h1v7h-1zM266 139h1v3h-1zM266 586h1v3h-1zM266 360h1v7h-1zM280 139h1v3h-1zM280 586h1v3h-1zM280 360h1v7h-1zM293 139h1v3h-1zM293 586h1v3h-1zM293 360h1v7h-1zM307 139h1v5h-1zM307 584h1v5h-1zM307 360h1v7h-1zM321 139h1v3h-1zM321 586h1v3h-1zM321 360h1v7h-1zM335 139h1v3h-1zM335 586h1v3h-1zM335 360h1v7h-1zM349 139h1v3h-1zM349 586h1v3h-1zM349 360h1v7h-1zM363 139h1v3h-1zM363 586h1v3h-1zM363 360h1v7h-1zM376 139h1v5h-1zM376 584h1v5h-1zM390 139h1v3h-1zM390 586h1v3h-1zM390 360h1v7h-1zM404 139h1v3h-1zM404 586h1v3h-1zM404 360h1v7h-1zM418 139h1v3h-1zM418 586h1v3h-1zM418 360h1v7h-1zM432 139h1v3h-1zM432 586h1v3h-1zM432 360h1v7h-1zM446 139h1v5h-1zM446 584h1v5h-1zM446 360h1v7h-1zM459 139h1v3h-1zM459 586h1v3h-1zM459 360h1v7h-1zM473 139h1v3h-1zM473 586h1v3h-1zM473 360h1v7h-1zM487 139h1v3h-1zM487 586h1v3h-1zM487 360h1v7h-1zM501 139h1v3h-1zM501 586h1v3h-1zM501 360h1v7h-1zM515 139h1v5h-1zM515 584h1v5h-1zM515 360h1v7h-1zM528 139h1v3h-1zM528 586h1v3h-1zM528 360h1v7h-1zM542 139h1v3h-1zM542 586h1v3h-1zM542 360h1v7h-1zM556 139h1v3h-1zM556 586h1v3h-1zM556 360h1v7h-1zM570 139h1v3h-1zM570 586h1v3h-1zM570 360h1v7h-1zM584 139h1v5h-1zM584 584h1v5h-1zM584 360h1v7h-1zM598 139h1v3h-1zM598 586h1v3h-1zM598 360h1v7h-1zM611 139h1v3h-1zM611 586h1v3h-1zM611 360h1v7h-1zM625 139h1v3h-1zM625 586h1v3h-1zM625 360h1v7h-1zM639 139h1v3h-1zM639 586h1v3h-1zM639 360h1v7h-1zM653 139h1v5h-1zM653 584h1v5h-1zM653 360h1v7h-1zM667 139h1v3h-1zM667 586h1v3h-1zM667 360h1v7h-1zM681 139h1v3h-1zM681 586h1v3h-1zM681 360h1v7h-1zM694 139h1v3h-1zM694 586h1v3h-1zM694 360h1v7h-1zM708 139h1v3h-1zM708 586h1v3h-1zM708 360h1v7h-1zM32 149h3v1h-3zM720 149h3v1h-3zM373 149h7v1h-7zM32 160h3v1h-3zM720 160h3v1h-3zM373 160h7v1h-7zM32 171h3v1h-3zM720 171h3v1h-3zM373 171h7v1h-7zM32 183h3v1h-3zM720 183h3v1h-3zM373 183h7v1h-7zM32 194h5v1h-5zM718 194h5v1h-5zM373 194h7v1h-7zM32 205h3v1h-3zM720 205h3v1h-3zM373 205h7v1h-7zM32 216h3v1h-3zM720 216h3v1h-3zM373 216h7v1h-7zM32 228h3v1h-3zM720 228h3v1h-3zM373 228h7v1h-7zM32 239h3v1h-3zM720 239h3v1h-3zM373 239h7v1h-7zM32 250h5v1h-5zM718 250h5v1h-5zM373 250h7v1h-7zM32 262h3v1h-3zM720 262h3v1h-3zM373 262h7v1h-7zM32 273h3v1h-3zM720 273h3v1h-3zM373 273h7v1h-7zM32 284h3v1h-3zM720 284h3v1h-3zM373 284h7v1h-7zM32 295h3v1h-3zM720 295h3v1h-3zM373 295h7v1h-7zM32 307h5v1h-5zM718 307h5v1h-5zM373 307h7v1h-7zM32 318h3v1h-3zM720 318h3v1h-3zM373 318h7v1h-7zM32 329h3v1h-3zM720 329h3v1h-3zM373 329h7v1h-7zM32 340h3v1h-3zM720 340h3v1h-3zM373 340h7v1h-7zM32 352h3v1h-3zM720 352h3v1h-3zM373 352h7v1h-7zM32 363h5v1h-5zM718 363h5v1h-5zM32 374h3v1h-3zM720 374h3v1h-3zM373 374h7v1h-7zM32 386h3v1h-3zM720 386h3v1h-3zM373 386h7v1h-7zM32 397h3v1h-3zM720 397h3v1h-3zM373 397h7v1h-7zM32 408h3v1h-3zM720 408h3v1h-3zM373 408h7v1h-7zM32 419h5v1h-5zM718 419h5v1h-5zM373 419h7v1h-7zM32 431h3v1h-3zM720 431h3v1h-3zM373 431h7v1h-7zM32 442h3v1h-3zM720 442h3v1h-3zM373 442h7v1h-7zM32 453h3v1h-3zM720 453h3v1h-3zM373 453h7v1h-7zM32 464h3v1h-3zM720 464h3v1h-3zM373 464h7v1h-7zM32 476h5v1h-5zM718 476h5v1h-5zM373 476h7v1h-7zM32 487h3v1h-3zM720 487h3v1h-3zM373 487h7v1h-7zM32 498h3v1h-3zM720 498h3v1h-3zM373 498h7v1h-7zM32 510h3v1h-3zM720 510h3v1h-3zM373 510h7v1h-7zM32 521h3v1h-3zM720 521h3v1h-3zM373 521h7v1h-7zM32 532h5v1h-5zM718 532h5v1h-5zM373 532h7v1h-7zM32 543h3v1h-3zM720 543h3v1h-3zM373 543h7v1h-7zM32 555h3v1h-3zM720 555h3v1h-3zM373 555h7v1h-7zM32 566h3v1h-3zM720 566h3v1h-3zM373 566h7v1h-7zM32 577h3v1h-3zM720 577h3v1h-3zM373 577h7v1h-7zM32 363h691v1h-691zM376 139h1v450h-1z" fill="#d8d8d8"/>
<text x="51" y="575.400" font-size="12" fill="#f00000" font-family="Liberation Sans, sans-serif" style="white-space:pre">MATH Scale:&#160; 500mV</text>
<path d="M31 221h1v1h-1zM32 221h1v1h-1zM33 222h1v3h-1zM34 224h1v1h-1zM35 225h1v5h-1zM36 229h1v1h-1zM37 230h1v4h-1zM38 234h1v3h-1zM39 236h1v1h-1zM40 237h1v6h-1zM41 242h1v1h-1zM42 243h1v3h-1zM43 245h1v1h-1zM44 246h1v4h-1zM45 250h1v3h-1zM46 252h1v1h-1zM47 253h1v4h-1zM48 256h1v1h-1zM49 257h1v2h-1zM50 258h1v1h-1zM51 259h1v3h-1zM52 262h1v2h-1zM53 263h1v1h-1zM54 264h1v3h-1zM55 266h1v1h-1zM56 267h1v2h-1zM57 269h1v2h-1zM58 270h1v1h-1zM59 270h1v1h-1zM60 270h1v1h-1zM61 271h1v2h-1zM62 272h1v1h-1zM63 272h1v1h-1zM64 272h1v1h-1zM65 272h1v1h-1zM66 272h1v1h-1zM67 272h1v1h-1zM68 270h1v2h-1zM69 270h1v1h-1zM70 271h1v2h-1zM71 270h1v2h-1zM72 270h1v1h-1zM73 268h1v2h-1zM74 268h1v1h-1zM75 266h1v2h-1zM76 265h1v1h-1zM77 265h1v1h-1zM78 263h1v2h-1zM79 263h1v1h-1zM80 259h1v4h-1zM81 259h1v1h-1zM82 258h1v1h-1zM83 254h1v4h-1zM84 254h1v1h-1zM85 251h1v3h-1zM86 251h1v1h-1zM87 247h1v4h-1zM88 247h1v1h-1zM89 243h1v4h-1zM90 240h1v3h-1zM91 240h1v1h-1zM92 235h1v5h-1zM93 235h1v1h-1zM94 231h1v4h-1zM95 231h1v1h-1zM96 228h1v3h-1zM97 222h1v6h-1zM98 222h1v1h-1zM99 219h1v3h-1zM100 219h1v1h-1zM101 214h1v5h-1zM102 210h1v4h-1zM103 210h1v1h-1zM104 205h1v5h-1zM105 205h1v1h-1zM106 201h1v4h-1zM107 201h1v1h-1zM108 198h1v3h-1zM109 192h1v6h-1zM110 192h1v1h-1zM111 189h1v3h-1zM112 189h1v1h-1zM113 185h1v4h-1zM114 185h1v1h-1zM115 182h1v3h-1zM116 177h1v5h-1zM117 177h1v1h-1zM118 175h1v2h-1zM119 175h1v1h-1zM120 173h1v2h-1zM121 170h1v3h-1zM122 170h1v1h-1zM123 168h1v2h-1zM124 168h1v1h-1zM125 166h1v2h-1zM126 166h1v1h-1zM127 164h1v2h-1zM128 163h1v1h-1zM129 163h1v1h-1zM130 163h1v1h-1zM131 163h1v1h-1zM132 163h1v1h-1zM133 163h1v1h-1zM134 161h1v2h-1zM135 162h1v2h-1zM136 163h1v1h-1zM137 163h1v1h-1zM138 163h1v1h-1zM139 163h1v1h-1zM140 164h1v1h-1zM141 164h1v1h-1zM142 164h1v1h-1zM143 164h1v1h-1zM144 165h1v2h-1zM145 166h1v1h-1zM146 167h1v4h-1zM147 171h1v1h-1zM148 171h1v1h-1zM149 172h1v2h-1zM150 173h1v1h-1zM151 174h1v4h-1zM152 177h1v1h-1zM153 178h1v3h-1zM154 181h1v4h-1zM155 184h1v1h-1zM156 185h1v3h-1zM157 187h1v1h-1zM158 188h1v4h-1zM159 191h1v1h-1zM160 192h1v3h-1zM161 195h1v4h-1zM162 198h1v1h-1zM163 199h1v5h-1zM164 203h1v1h-1zM165 204h1v4h-1zM166 208h1v3h-1zM167 210h1v1h-1zM168 211h1v5h-1zM169 215h1v1h-1zM170 216h1v4h-1zM171 219h1v1h-1zM172 220h1v5h-1zM173 225h1v4h-1zM174 228h1v1h-1zM175 229h1v5h-1zM176 233h1v1h-1zM177 234h1v3h-1zM178 236h1v1h-1zM179 237h1v4h-1zM180 241h1v3h-1zM181 243h1v1h-1zM182 244h1v4h-1zM183 247h1v1h-1zM184 248h1v4h-1zM185 252h1v3h-1zM186 254h1v1h-1zM187 255h1v4h-1zM188 258h1v1h-1zM189 259h1v3h-1zM190 261h1v1h-1zM191 262h1v2h-1zM192 264h1v2h-1zM193 265h1v1h-1zM194 266h1v3h-1zM195 268h1v1h-1zM196 268h1v1h-1zM197 268h1v1h-1zM198 269h1v2h-1zM199 271h1v2h-1zM200 272h1v1h-1zM201 272h1v1h-1zM202 272h1v1h-1zM203 272h1v1h-1zM204 272h1v1h-1zM205 272h1v1h-1zM206 272h1v1h-1zM207 272h1v1h-1zM208 272h1v1h-1zM209 272h1v1h-1zM210 270h1v2h-1zM211 268h1v2h-1zM212 268h1v1h-1zM213 266h1v2h-1zM214 266h1v1h-1zM215 265h1v1h-1zM216 265h1v1h-1zM217 263h1v2h-1zM218 261h1v2h-1zM219 261h1v1h-1zM220 258h1v3h-1zM221 258h1v1h-1zM222 254h1v4h-1zM223 254h1v1h-1zM224 251h1v3h-1zM225 247h1v4h-1zM226 247h1v1h-1zM227 243h1v4h-1zM228 243h1v1h-1zM229 240h1v3h-1zM230 236h1v4h-1zM231 236h1v1h-1zM232 231h1v5h-1zM233 231h1v1h-1zM234 228h1v3h-1zM235 228h1v1h-1zM236 224h1v4h-1zM237 219h1v5h-1zM238 219h1v1h-1zM239 215h1v4h-1zM240 215h1v1h-1zM241 210h1v5h-1zM242 210h1v1h-1zM243 207h1v3h-1zM244 201h1v6h-1zM245 201h1v1h-1zM246 198h1v3h-1zM247 198h1v1h-1zM248 194h1v4h-1zM249 191h1v3h-1zM250 191h1v1h-1zM251 185h1v6h-1zM252 185h1v1h-1zM253 182h1v3h-1zM254 182h1v1h-1zM255 180h1v2h-1zM256 177h1v3h-1zM257 177h1v1h-1zM258 173h1v4h-1zM259 173h1v1h-1zM260 171h1v2h-1zM261 171h1v1h-1zM262 168h1v3h-1zM263 166h1v2h-1zM264 166h1v1h-1zM265 164h1v2h-1zM266 164h1v1h-1zM267 165h1v2h-1zM268 166h1v1h-1zM269 163h1v3h-1zM270 163h1v1h-1zM271 163h1v1h-1zM272 161h1v2h-1zM273 161h1v1h-1zM274 161h1v1h-1zM275 162h1v2h-1zM276 163h1v1h-1zM277 163h1v1h-1zM278 163h1v1h-1zM279 164h1v1h-1zM280 164h1v1h-1zM281 164h1v1h-1zM282 165h1v2h-1zM283 166h1v1h-1zM284 167h1v2h-1zM285 168h1v1h-1zM286 169h1v3h-1zM287 171h1v1h-1zM288 172h1v2h-1zM289 174h1v4h-1zM290 177h1v1h-1zM291 178h1v1h-1zM292 178h1v1h-1zM293 179h1v4h-1zM294 183h1v3h-1zM295 185h1v1h-1zM296 186h1v4h-1zM297 189h1v1h-1zM298 190h1v5h-1zM299 194h1v1h-1zM300 195h1v4h-1zM301 199h1v3h-1zM302 201h1v1h-1zM303 202h1v6h-1zM304 207h1v1h-1zM305 208h1v3h-1zM306 210h1v1h-1zM307 211h1v4h-1zM308 215h1v5h-1zM309 219h1v1h-1zM310 220h1v3h-1zM311 222h1v1h-1zM312 223h1v6h-1zM313 229h1v3h-1zM314 231h1v1h-1zM315 232h1v5h-1zM316 236h1v1h-1zM317 237h1v4h-1zM318 240h1v1h-1zM319 241h1v3h-1zM320 244h1v4h-1zM321 247h1v1h-1zM322 248h1v4h-1zM323 251h1v1h-1zM324 252h1v3h-1zM325 254h1v1h-1zM326 255h1v4h-1zM327 259h1v1h-1zM328 259h1v1h-1zM329 260h1v4h-1zM330 263h1v1h-1zM331 264h1v2h-1zM332 265h1v1h-1zM333 266h1v1h-1zM334 267h1v2h-1zM335 268h1v1h-1zM336 269h1v2h-1zM337 270h1v1h-1zM338 271h1v3h-1zM339 272h1v1h-1zM340 272h1v1h-1zM341 270h1v2h-1zM342 270h1v1h-1zM343 271h1v2h-1zM344 272h1v1h-1zM345 272h1v1h-1zM346 272h1v1h-1zM347 272h1v1h-1zM348 270h1v2h-1zM349 270h1v1h-1zM350 270h1v1h-1zM351 270h1v1h-1zM352 268h1v2h-1zM353 266h1v2h-1zM354 266h1v1h-1zM355 263h1v3h-1zM356 263h1v1h-1zM357 261h1v2h-1zM358 258h1v3h-1zM359 258h1v1h-1zM360 256h1v2h-1zM361 256h1v1h-1zM362 252h1v4h-1zM363 252h1v1h-1zM364 249h1v3h-1zM365 245h1v4h-1zM366 245h1v1h-1zM367 240h1v5h-1zM368 240h1v1h-1zM369 236h1v4h-1zM370 236h1v1h-1zM371 233h1v3h-1zM372 228h1v5h-1zM373 228h1v1h-1zM374 224h1v4h-1zM375 224h1v1h-1zM376 221h1v3h-1zM377 215h1v6h-1zM378 215h1v1h-1zM379 214h1v1h-1zM380 214h1v1h-1zM381 207h1v7h-1zM382 207h1v1h-1zM383 203h1v4h-1zM384 198h1v5h-1zM385 198h1v1h-1zM386 194h1v4h-1zM387 194h1v1h-1zM388 191h1v3h-1zM389 191h1v1h-1zM390 187h1v4h-1zM391 184h1v3h-1zM392 184h1v1h-1zM393 180h1v4h-1zM394 180h1v1h-1zM395 177h1v3h-1zM396 177h1v1h-1zM397 173h1v4h-1zM398 171h1v2h-1zM399 171h1v1h-1zM400 170h1v1h-1zM401 170h1v1h-1zM402 166h1v4h-1zM403 164h1v2h-1zM404 164h1v1h-1zM405 164h1v1h-1zM406 164h1v1h-1zM407 163h1v1h-1zM408 163h1v1h-1zM409 163h1v1h-1zM410 161h1v2h-1zM411 161h1v1h-1zM412 161h1v1h-1zM413 161h1v1h-1zM414 162h1v2h-1zM415 163h1v1h-1zM416 163h1v1h-1zM417 163h1v1h-1zM418 163h1v1h-1zM419 164h1v1h-1zM420 164h1v1h-1zM421 165h1v2h-1zM422 167h1v2h-1zM423 168h1v1h-1zM424 169h1v2h-1zM425 170h1v1h-1zM426 171h1v3h-1zM427 173h1v1h-1zM428 174h1v2h-1zM429 176h1v3h-1zM430 178h1v1h-1zM431 179h1v4h-1zM432 182h1v1h-1zM433 183h1v3h-1zM434 185h1v1h-1zM435 186h1v4h-1zM436 190h1v3h-1zM437 192h1v1h-1zM438 193h1v4h-1zM439 196h1v1h-1zM440 197h1v5h-1zM441 201h1v1h-1zM442 202h1v4h-1zM443 206h1v5h-1zM444 210h1v1h-1zM445 211h1v4h-1zM446 214h1v1h-1zM447 215h1v3h-1zM448 218h1v5h-1zM449 222h1v1h-1zM450 223h1v4h-1zM451 226h1v1h-1zM452 227h1v5h-1zM453 231h1v1h-1zM454 232h1v4h-1zM455 236h1v3h-1zM456 238h1v1h-1zM457 239h1v5h-1zM458 243h1v1h-1zM459 244h1v4h-1zM460 247h1v1h-1zM461 248h1v4h-1zM462 252h1v3h-1zM463 254h1v1h-1zM464 255h1v2h-1zM465 256h1v1h-1zM466 257h1v3h-1zM467 260h1v4h-1zM468 263h1v1h-1zM469 264h1v2h-1zM470 265h1v1h-1zM471 266h1v1h-1zM472 266h1v1h-1zM473 267h1v2h-1zM474 269h1v2h-1zM475 270h1v1h-1zM476 271h1v2h-1zM477 272h1v1h-1zM478 272h1v1h-1zM479 272h1v1h-1zM480 272h1v1h-1zM481 272h1v1h-1zM482 272h1v1h-1zM483 272h1v1h-1zM484 272h1v1h-1zM485 272h1v1h-1zM486 270h1v2h-1zM487 270h1v1h-1zM488 270h1v1h-1zM489 270h1v1h-1zM490 268h1v2h-1zM491 268h1v1h-1zM492 266h1v2h-1zM493 263h1v3h-1zM494 263h1v1h-1zM495 261h1v2h-1zM496 261h1v1h-1zM497 259h1v2h-1zM498 259h1v1h-1zM499 256h1v3h-1zM500 252h1v4h-1zM501 252h1v1h-1zM502 249h1v3h-1zM503 249h1v1h-1zM504 245h1v4h-1zM505 245h1v1h-1zM506 242h1v3h-1zM507 238h1v4h-1zM508 238h1v1h-1zM509 233h1v5h-1zM510 233h1v1h-1zM511 229h1v4h-1zM512 224h1v5h-1zM513 224h1v1h-1zM514 221h1v3h-1zM515 221h1v1h-1zM516 215h1v6h-1zM517 215h1v1h-1zM518 212h1v3h-1zM519 208h1v4h-1zM520 208h1v1h-1zM521 205h1v3h-1zM522 205h1v1h-1zM523 200h1v5h-1zM524 200h1v1h-1zM525 194h1v6h-1zM526 191h1v3h-1zM527 191h1v1h-1zM528 187h1v4h-1zM529 187h1v1h-1zM530 184h1v3h-1zM531 180h1v4h-1zM532 180h1v1h-1zM533 177h1v3h-1zM534 177h1v1h-1zM535 175h1v2h-1zM536 175h1v1h-1zM537 171h1v4h-1zM538 170h1v1h-1zM539 170h1v1h-1zM540 168h1v2h-1zM541 168h1v1h-1zM542 166h1v2h-1zM543 166h1v1h-1zM544 164h1v2h-1zM545 163h1v1h-1zM546 163h1v1h-1zM547 163h1v1h-1zM548 163h1v1h-1zM549 161h1v2h-1zM550 161h1v1h-1zM551 161h1v1h-1zM552 161h1v1h-1zM553 161h1v1h-1zM554 162h1v2h-1zM555 163h1v1h-1zM556 163h1v1h-1zM557 164h1v1h-1zM558 164h1v1h-1zM559 165h1v2h-1zM560 166h1v1h-1zM561 167h1v2h-1zM562 168h1v1h-1zM563 169h1v2h-1zM564 171h1v3h-1zM565 173h1v1h-1zM566 174h1v2h-1zM567 175h1v1h-1zM568 176h1v3h-1zM569 178h1v1h-1zM570 179h1v4h-1zM571 183h1v3h-1zM572 185h1v1h-1zM573 186h1v4h-1zM574 189h1v1h-1zM575 190h1v3h-1zM576 193h1v4h-1zM577 196h1v1h-1zM578 197h1v4h-1zM579 200h1v1h-1zM580 201h1v5h-1zM581 205h1v1h-1zM582 206h1v3h-1zM583 209h1v6h-1zM584 214h1v1h-1zM585 215h1v3h-1zM586 217h1v1h-1zM587 218h1v4h-1zM588 221h1v1h-1zM589 222h1v5h-1zM590 227h1v3h-1zM591 229h1v1h-1zM592 230h1v6h-1zM593 235h1v1h-1zM594 236h1v3h-1zM595 239h1v4h-1zM596 242h1v1h-1zM597 243h1v3h-1zM598 245h1v1h-1zM599 246h1v4h-1zM600 249h1v1h-1zM601 250h1v3h-1zM602 253h1v4h-1zM603 256h1v1h-1zM604 257h1v3h-1zM605 259h1v1h-1zM606 260h1v2h-1zM607 261h1v1h-1zM608 262h1v4h-1zM609 266h1v1h-1zM610 266h1v1h-1zM611 267h1v2h-1zM612 268h1v1h-1zM613 269h1v2h-1zM614 270h1v1h-1zM615 270h1v1h-1zM616 271h1v2h-1zM617 272h1v1h-1zM618 272h1v1h-1zM619 272h1v1h-1zM620 272h1v1h-1zM621 272h1v1h-1zM622 272h1v1h-1zM623 272h1v1h-1zM624 272h1v1h-1zM625 270h1v2h-1zM626 270h1v1h-1zM627 270h1v1h-1zM628 268h1v2h-1zM629 268h1v1h-1zM630 266h1v2h-1zM631 266h1v1h-1zM632 265h1v1h-1zM633 265h1v1h-1zM634 261h1v4h-1zM635 259h1v2h-1zM636 259h1v1h-1zM637 256h1v3h-1zM638 256h1v1h-1zM639 252h1v4h-1zM640 249h1v3h-1zM641 249h1v1h-1zM642 245h1v4h-1zM643 245h1v1h-1zM644 242h1v3h-1zM645 242h1v1h-1zM646 238h1v4h-1zM647 235h1v3h-1zM648 235h1v1h-1zM649 229h1v6h-1zM650 229h1v1h-1zM651 226h1v3h-1zM652 226h1v1h-1zM653 221h1v5h-1zM654 217h1v4h-1zM655 217h1v1h-1zM656 212h1v5h-1zM657 212h1v1h-1zM658 208h1v4h-1zM659 205h1v3h-1zM660 205h1v1h-1zM661 200h1v5h-1zM662 200h1v1h-1zM663 196h1v4h-1zM664 196h1v1h-1zM665 192h1v4h-1zM666 187h1v5h-1zM667 187h1v1h-1zM668 184h1v3h-1zM669 184h1v1h-1zM670 180h1v4h-1zM671 180h1v1h-1zM672 178h1v2h-1zM673 175h1v3h-1zM674 175h1v1h-1zM675 171h1v4h-1zM676 171h1v1h-1zM677 170h1v1h-1zM678 170h1v1h-1zM679 168h1v2h-1zM680 166h1v2h-1zM681 166h1v1h-1zM682 164h1v2h-1zM683 164h1v1h-1zM684 163h1v1h-1zM685 163h1v1h-1zM686 163h1v1h-1zM687 161h1v2h-1zM688 161h1v1h-1zM689 161h1v1h-1zM690 161h1v1h-1zM691 161h1v1h-1zM692 162h1v2h-1zM693 163h1v1h-1zM694 163h1v1h-1zM695 163h1v1h-1zM696 164h1v1h-1zM697 164h1v1h-1zM698 165h1v2h-1zM699 167h1v2h-1zM700 168h1v1h-1zM701 169h1v2h-1zM702 170h1v1h-1zM703 171h1v1h-1zM704 172h1v4h-1zM705 175h1v1h-1zM706 176h1v2h-1zM707 177h1v1h-1zM708 178h1v3h-1zM709 180h1v1h-1zM710 181h1v4h-1zM711 185h1v3h-1zM712 187h1v1h-1zM713 188h1v4h-1zM714 191h1v1h-1zM715 192h1v5h-1zM716 196h1v1h-1zM717 197h1v4h-1zM718 201h1v3h-1zM719 203h1v1h-1zM720 204h1v5h-1zM721 208h1v1h-1zM722 209h1v4h-1zM723 213h1v5h-1z" fill="#ffff00"/>
<path d="M31 433h1v1h-1zM32 433h1v1h-1zM33 434h1v6h-1zM34 439h1v1h-1zM35 440h1v5h-1zM36 444h1v1h-1zM37 445h1v3h-1zM38 448h1v4h-1zM39 451h1v1h-1zM40 452h1v3h-1zM41 454h1v1h-1zM42 455h1v4h-1zM43 458h1v1h-1zM44 459h1v5h-1zM45 464h1v4h-1zM46 467h1v1h-1zM47 468h1v3h-1zM48 470h1v1h-1zM49 471h1v4h-1zM50 474h1v1h-1zM51 475h1v2h-1zM52 477h1v1h-1zM53 477h1v1h-1zM54 478h1v4h-1zM55 481h1v1h-1zM56 482h1v2h-1zM57 483h1v1h-1zM58 483h1v1h-1zM59 484h1v1h-1zM60 484h1v1h-1zM61 485h1v2h-1zM62 486h1v1h-1zM63 486h1v1h-1zM64 486h1v1h-1zM65 486h1v1h-1zM66 486h1v1h-1zM67 486h1v1h-1zM68 486h1v1h-1zM69 486h1v1h-1zM70 486h1v1h-1zM71 484h1v2h-1zM72 484h1v1h-1zM73 483h1v1h-1zM74 483h1v1h-1zM75 481h1v2h-1zM76 479h1v2h-1zM77 479h1v1h-1zM78 477h1v2h-1zM79 477h1v1h-1zM80 472h1v5h-1zM81 472h1v1h-1zM82 472h1v1h-1zM83 467h1v5h-1zM84 467h1v1h-1zM85 465h1v2h-1zM86 465h1v1h-1zM87 460h1v5h-1zM88 460h1v1h-1zM89 456h1v4h-1zM90 454h1v2h-1zM91 454h1v1h-1zM92 449h1v5h-1zM93 449h1v1h-1zM94 444h1v5h-1zM95 444h1v1h-1zM96 439h1v5h-1zM97 437h1v2h-1zM98 437h1v1h-1zM99 432h1v5h-1zM100 307h1v125h-1zM101 303h1v4h-1zM102 301h1v2h-1zM103 301h1v1h-1zM104 296h1v5h-1zM105 296h1v1h-1zM106 293h1v3h-1zM107 293h1v1h-1zM108 289h1v4h-1zM109 287h1v2h-1zM110 287h1v1h-1zM111 282h1v5h-1zM112 282h1v1h-1zM113 279h1v3h-1zM114 279h1v1h-1zM115 275h1v4h-1zM116 272h1v3h-1zM117 272h1v1h-1zM118 270h1v2h-1zM119 270h1v1h-1zM120 268h1v2h-1zM121 265h1v3h-1zM122 265h1v1h-1zM123 265h1v1h-1zM124 265h1v1h-1zM125 263h1v2h-1zM126 263h1v1h-1zM127 259h1v4h-1zM128 258h1v1h-1zM129 258h1v1h-1zM130 259h1v1h-1zM131 259h1v1h-1zM132 258h1v1h-1zM133 258h1v1h-1zM134 258h1v1h-1zM135 258h1v1h-1zM136 258h1v1h-1zM137 258h1v1h-1zM138 258h1v1h-1zM139 256h1v2h-1zM140 257h1v3h-1zM141 259h1v1h-1zM142 259h1v1h-1zM143 259h1v1h-1zM144 260h1v2h-1zM145 261h1v1h-1zM146 262h1v4h-1zM147 266h1v1h-1zM148 266h1v1h-1zM149 267h1v4h-1zM150 270h1v1h-1zM151 271h1v2h-1zM152 272h1v1h-1zM153 273h1v3h-1zM154 276h1v2h-1zM155 277h1v1h-1zM156 278h1v3h-1zM157 280h1v1h-1zM158 281h1v4h-1zM159 284h1v1h-1zM160 285h1v5h-1zM161 290h1v2h-1zM162 291h1v1h-1zM163 292h1v3h-1zM164 294h1v1h-1zM165 295h1v6h-1zM166 300h1v1h-1zM167 300h1v1h-1zM168 301h1v7h-1zM169 308h1v125h-1zM170 433h1v1h-1zM171 433h1v1h-1zM172 434h1v6h-1zM173 440h1v3h-1zM174 442h1v1h-1zM175 443h1v5h-1zM176 447h1v1h-1zM177 448h1v4h-1zM178 451h1v1h-1zM179 452h1v5h-1zM180 457h1v2h-1zM181 458h1v1h-1zM182 459h1v3h-1zM183 461h1v1h-1zM184 462h1v6h-1zM185 468h1v1h-1zM186 468h1v1h-1zM187 469h1v4h-1zM188 472h1v1h-1zM189 473h1v4h-1zM190 476h1v1h-1zM191 477h1v1h-1zM192 478h1v2h-1zM193 479h1v1h-1zM194 480h1v4h-1zM195 483h1v1h-1zM196 484h1v1h-1zM197 484h1v1h-1zM198 485h1v2h-1zM199 486h1v1h-1zM200 486h1v1h-1zM201 486h1v1h-1zM202 486h1v1h-1zM203 486h1v1h-1zM204 487h1v2h-1zM205 488h1v1h-1zM206 488h1v1h-1zM207 488h1v1h-1zM208 486h1v2h-1zM209 486h1v1h-1zM210 484h1v2h-1zM211 484h1v1h-1zM212 484h1v1h-1zM213 481h1v3h-1zM214 481h1v1h-1zM215 479h1v2h-1zM216 479h1v1h-1zM217 477h1v2h-1zM218 476h1v1h-1zM219 476h1v1h-1zM220 472h1v4h-1zM221 472h1v1h-1zM222 468h1v4h-1zM223 468h1v1h-1zM224 463h1v5h-1zM225 463h1v1h-1zM226 463h1v1h-1zM227 458h1v5h-1zM228 458h1v1h-1zM229 453h1v5h-1zM230 451h1v2h-1zM231 451h1v1h-1zM232 446h1v5h-1zM233 446h1v1h-1zM234 440h1v6h-1zM235 440h1v1h-1zM236 435h1v5h-1zM237 433h1v2h-1zM238 433h1v1h-1zM239 305h1v128h-1zM240 305h1v1h-1zM241 301h1v4h-1zM242 301h1v1h-1zM243 294h1v7h-1zM244 294h1v1h-1zM245 294h1v1h-1zM246 291h1v3h-1zM247 291h1v1h-1zM248 284h1v7h-1zM249 284h1v1h-1zM250 284h1v1h-1zM251 279h1v5h-1zM252 279h1v1h-1zM253 277h1v2h-1zM254 277h1v1h-1zM255 273h1v4h-1zM256 272h1v1h-1zM257 272h1v1h-1zM258 266h1v6h-1zM259 266h1v1h-1zM260 266h1v1h-1zM261 266h1v1h-1zM262 265h1v1h-1zM263 263h1v2h-1zM264 263h1v1h-1zM265 261h1v2h-1zM266 261h1v1h-1zM267 259h1v2h-1zM268 259h1v1h-1zM269 259h1v1h-1zM270 256h1v3h-1zM271 256h1v1h-1zM272 257h1v2h-1zM273 258h1v1h-1zM274 258h1v1h-1zM275 258h1v1h-1zM276 258h1v1h-1zM277 259h1v1h-1zM278 259h1v1h-1zM279 259h1v1h-1zM280 259h1v1h-1zM281 260h1v2h-1zM282 262h1v2h-1zM283 263h1v1h-1zM284 264h1v2h-1zM285 265h1v1h-1zM286 266h1v1h-1zM287 266h1v1h-1zM288 267h1v2h-1zM289 269h1v4h-1zM290 272h1v1h-1zM291 273h1v1h-1zM292 273h1v1h-1zM293 274h1v4h-1zM294 278h1v2h-1zM295 279h1v1h-1zM296 280h1v5h-1zM297 284h1v1h-1zM298 285h1v3h-1zM299 287h1v1h-1zM300 288h1v4h-1zM301 291h1v1h-1zM302 291h1v1h-1zM303 292h1v7h-1zM304 298h1v1h-1zM305 299h1v3h-1zM306 301h1v1h-1zM307 302h1v6h-1zM308 308h1v125h-1zM309 432h1v1h-1zM310 433h1v5h-1zM311 437h1v1h-1zM312 438h1v5h-1zM313 443h1v2h-1zM314 444h1v1h-1zM315 445h1v7h-1zM316 451h1v1h-1zM317 452h1v3h-1zM318 454h1v1h-1zM319 455h1v4h-1zM320 459h1v2h-1zM321 460h1v1h-1zM322 461h1v5h-1zM323 465h1v1h-1zM324 466h1v3h-1zM325 468h1v1h-1zM326 469h1v4h-1zM327 473h1v2h-1zM328 474h1v1h-1zM329 475h1v3h-1zM330 477h1v1h-1zM331 478h1v4h-1zM332 481h1v1h-1zM333 482h1v2h-1zM334 483h1v1h-1zM335 483h1v1h-1zM336 484h1v1h-1zM337 484h1v1h-1zM338 485h1v2h-1zM339 484h1v2h-1zM340 484h1v1h-1zM341 485h1v4h-1zM342 488h1v1h-1zM343 486h1v2h-1zM344 486h1v1h-1zM345 486h1v1h-1zM346 486h1v1h-1zM347 486h1v1h-1zM348 484h1v2h-1zM349 484h1v1h-1zM350 483h1v1h-1zM351 483h1v1h-1zM352 481h1v2h-1zM353 481h1v1h-1zM354 481h1v1h-1zM355 477h1v4h-1zM356 477h1v1h-1zM357 474h1v3h-1zM358 472h1v2h-1zM359 472h1v1h-1zM360 468h1v4h-1zM361 468h1v1h-1zM362 465h1v3h-1zM363 465h1v1h-1zM364 461h1v4h-1zM365 460h1v1h-1zM366 460h1v1h-1zM367 454h1v6h-1zM368 454h1v1h-1zM369 449h1v5h-1zM370 449h1v1h-1zM371 446h1v3h-1zM372 442h1v4h-1zM373 442h1v1h-1zM374 437h1v5h-1zM375 437h1v1h-1zM376 433h1v4h-1zM377 307h1v126h-1zM378 307h1v1h-1zM379 303h1v4h-1zM380 303h1v1h-1zM381 298h1v5h-1zM382 298h1v1h-1zM383 294h1v4h-1zM384 291h1v3h-1zM385 291h1v1h-1zM386 287h1v4h-1zM387 287h1v1h-1zM388 284h1v3h-1zM389 284h1v1h-1zM390 280h1v4h-1zM391 275h1v5h-1zM392 275h1v1h-1zM393 273h1v2h-1zM394 273h1v1h-1zM395 272h1v1h-1zM396 272h1v1h-1zM397 268h1v4h-1zM398 266h1v2h-1zM399 266h1v1h-1zM400 265h1v1h-1zM401 265h1v1h-1zM402 259h1v6h-1zM403 260h1v2h-1zM404 261h1v1h-1zM405 258h1v3h-1zM406 258h1v1h-1zM407 259h1v1h-1zM408 259h1v1h-1zM409 259h1v1h-1zM410 258h1v1h-1zM411 258h1v1h-1zM412 258h1v1h-1zM413 258h1v1h-1zM414 259h1v1h-1zM415 259h1v1h-1zM416 259h1v1h-1zM417 259h1v1h-1zM418 259h1v1h-1zM419 260h1v2h-1zM420 261h1v1h-1zM421 262h1v2h-1zM422 263h1v1h-1zM423 263h1v1h-1zM424 264h1v3h-1zM425 266h1v1h-1zM426 267h1v2h-1zM427 268h1v1h-1zM428 269h1v4h-1zM429 273h1v1h-1zM430 273h1v1h-1zM431 274h1v4h-1zM432 277h1v1h-1zM433 278h1v3h-1zM434 280h1v1h-1zM435 281h1v4h-1zM436 285h1v2h-1zM437 286h1v1h-1zM438 287h1v3h-1zM439 289h1v1h-1zM440 290h1v4h-1zM441 293h1v1h-1zM442 294h1v5h-1zM443 298h1v1h-1zM444 298h1v1h-1zM445 299h1v5h-1zM446 303h1v1h-1zM447 304h1v130h-1zM448 434h1v2h-1zM449 435h1v1h-1zM450 436h1v5h-1zM451 440h1v1h-1zM452 441h1v6h-1zM453 446h1v1h-1zM454 447h1v5h-1zM455 452h1v2h-1zM456 453h1v1h-1zM457 454h1v3h-1zM458 456h1v1h-1zM459 457h1v5h-1zM460 461h1v1h-1zM461 462h1v4h-1zM462 466h1v3h-1zM463 468h1v1h-1zM464 469h1v4h-1zM465 472h1v1h-1zM466 473h1v2h-1zM467 475h1v2h-1zM468 476h1v1h-1zM469 477h1v3h-1zM470 479h1v1h-1zM471 480h1v2h-1zM472 481h1v1h-1zM473 482h1v2h-1zM474 484h1v1h-1zM475 484h1v1h-1zM476 485h1v2h-1zM477 486h1v1h-1zM478 486h1v1h-1zM479 486h1v1h-1zM480 486h1v1h-1zM481 486h1v1h-1zM482 486h1v1h-1zM483 487h1v2h-1zM484 488h1v1h-1zM485 486h1v2h-1zM486 484h1v2h-1zM487 484h1v1h-1zM488 484h1v1h-1zM489 484h1v1h-1zM490 483h1v1h-1zM491 483h1v1h-1zM492 481h1v2h-1zM493 479h1v2h-1zM494 479h1v1h-1zM495 476h1v3h-1zM496 476h1v1h-1zM497 472h1v4h-1zM498 472h1v1h-1zM499 468h1v4h-1zM500 467h1v1h-1zM501 467h1v1h-1zM502 463h1v4h-1zM503 463h1v1h-1zM504 458h1v5h-1zM505 458h1v1h-1zM506 454h1v4h-1zM507 453h1v1h-1zM508 453h1v1h-1zM509 447h1v6h-1zM510 447h1v1h-1zM511 442h1v5h-1zM512 439h1v3h-1zM513 439h1v1h-1zM514 435h1v4h-1zM515 435h1v1h-1zM516 307h1v128h-1zM517 307h1v1h-1zM518 300h1v7h-1zM519 298h1v2h-1zM520 298h1v1h-1zM521 296h1v2h-1zM522 296h1v1h-1zM523 291h1v5h-1zM524 291h1v1h-1zM525 287h1v4h-1zM526 282h1v5h-1zM527 282h1v1h-1zM528 279h1v3h-1zM529 279h1v1h-1zM530 277h1v2h-1zM531 275h1v2h-1zM532 275h1v1h-1zM533 272h1v3h-1zM534 272h1v1h-1zM535 270h1v2h-1zM536 270h1v1h-1zM537 266h1v4h-1zM538 265h1v1h-1zM539 265h1v1h-1zM540 263h1v2h-1zM541 263h1v1h-1zM542 261h1v2h-1zM543 261h1v1h-1zM544 259h1v2h-1zM545 259h1v1h-1zM546 259h1v1h-1zM547 259h1v1h-1zM548 259h1v1h-1zM549 258h1v1h-1zM550 258h1v1h-1zM551 258h1v1h-1zM552 258h1v1h-1zM553 258h1v1h-1zM554 258h1v1h-1zM555 258h1v1h-1zM556 259h1v1h-1zM557 258h1v1h-1zM558 258h1v1h-1zM559 259h1v5h-1zM560 263h1v1h-1zM561 264h1v2h-1zM562 265h1v1h-1zM563 265h1v1h-1zM564 266h1v3h-1zM565 268h1v1h-1zM566 269h1v2h-1zM567 270h1v1h-1zM568 271h1v3h-1zM569 273h1v1h-1zM570 274h1v4h-1zM571 278h1v2h-1zM572 279h1v1h-1zM573 280h1v3h-1zM574 282h1v1h-1zM575 283h1v2h-1zM576 285h1v3h-1zM577 287h1v1h-1zM578 288h1v4h-1zM579 291h1v1h-1zM580 292h1v5h-1zM581 296h1v1h-1zM582 297h1v4h-1zM583 301h1v1h-1zM584 301h1v1h-1zM585 302h1v129h-1zM586 430h1v1h-1zM587 431h1v7h-1zM588 437h1v1h-1zM589 438h1v3h-1zM590 441h1v4h-1zM591 444h1v1h-1zM592 445h1v5h-1zM593 449h1v1h-1zM594 450h1v4h-1zM595 454h1v1h-1zM596 454h1v1h-1zM597 455h1v6h-1zM598 460h1v1h-1zM599 461h1v5h-1zM600 465h1v1h-1zM601 466h1v3h-1zM602 469h1v2h-1zM603 470h1v1h-1zM604 471h1v4h-1zM605 474h1v1h-1zM606 475h1v3h-1zM607 477h1v1h-1zM608 478h1v2h-1zM609 480h1v2h-1zM610 481h1v1h-1zM611 482h1v2h-1zM612 483h1v1h-1zM613 484h1v3h-1zM614 486h1v1h-1zM615 486h1v1h-1zM616 487h1v2h-1zM617 488h1v1h-1zM618 488h1v1h-1zM619 488h1v1h-1zM620 486h1v2h-1zM621 486h1v1h-1zM622 486h1v1h-1zM623 486h1v1h-1zM624 486h1v1h-1zM625 484h1v2h-1zM626 484h1v1h-1zM627 484h1v1h-1zM628 481h1v3h-1zM629 481h1v1h-1zM630 481h1v1h-1zM631 481h1v1h-1zM632 477h1v4h-1zM633 477h1v1h-1zM634 476h1v1h-1zM635 474h1v2h-1zM636 474h1v1h-1zM637 470h1v4h-1zM638 470h1v1h-1zM639 467h1v3h-1zM640 465h1v2h-1zM641 465h1v1h-1zM642 460h1v5h-1zM643 460h1v1h-1zM644 456h1v4h-1zM645 456h1v1h-1zM646 451h1v5h-1zM647 449h1v2h-1zM648 449h1v1h-1zM649 444h1v5h-1zM650 444h1v1h-1zM651 439h1v5h-1zM652 439h1v1h-1zM653 433h1v6h-1zM654 432h1v1h-1zM655 305h1v127h-1zM656 303h1v2h-1zM657 303h1v1h-1zM658 300h1v3h-1zM659 296h1v4h-1zM660 296h1v1h-1zM661 293h1v3h-1zM662 293h1v1h-1zM663 286h1v7h-1zM664 286h1v1h-1zM665 284h1v2h-1zM666 282h1v2h-1zM667 282h1v1h-1zM668 275h1v7h-1zM669 275h1v1h-1zM670 275h1v1h-1zM671 275h1v1h-1zM672 272h1v3h-1zM673 270h1v2h-1zM674 270h1v1h-1zM675 268h1v2h-1zM676 268h1v1h-1zM677 265h1v3h-1zM678 265h1v1h-1zM679 263h1v2h-1zM680 263h1v1h-1zM681 263h1v1h-1zM682 261h1v2h-1zM683 261h1v1h-1zM684 256h1v5h-1zM685 257h1v3h-1zM686 259h1v1h-1zM687 258h1v1h-1zM688 258h1v1h-1zM689 256h1v2h-1zM690 256h1v1h-1zM691 256h1v1h-1zM692 257h1v3h-1zM693 259h1v1h-1zM694 259h1v1h-1zM695 259h1v1h-1zM696 260h1v2h-1zM697 261h1v1h-1zM698 261h1v1h-1zM699 262h1v2h-1zM700 263h1v1h-1zM701 264h1v2h-1zM702 265h1v1h-1zM703 266h1v3h-1zM704 269h1v2h-1zM705 270h1v1h-1zM706 271h1v2h-1zM707 272h1v1h-1zM708 273h1v3h-1zM709 275h1v1h-1zM710 276h1v4h-1zM711 280h1v1h-1zM712 280h1v1h-1zM713 281h1v2h-1zM714 282h1v1h-1zM715 283h1v5h-1zM716 287h1v1h-1zM717 288h1v6h-1zM718 294h1v1h-1zM719 294h1v1h-1zM720 295h1v6h-1zM721 300h1v1h-1zM722 301h1v5h-1zM723 306h1v2h-1zM104 293h1v3h-1zM105 293h1v3h-1zM106 289h1v4h-1zM107 289h1v4h-1zM108 287h1v2h-1zM109 284h1v3h-1zM110 284h1v3h-1zM111 279h1v3h-1zM112 279h1v3h-1zM115 271h1v4h-1zM116 269h1v3h-1zM117 269h1v3h-1zM121 262h1v3h-1zM122 262h1v3h-1zM127 256h1v3h-1zM130 255h1v4h-1zM131 255h1v4h-1zM132 254h1v4h-1zM133 254h1v4h-1zM137 256h1v2h-1zM138 256h1v2h-1zM140 255h1v4h-1zM141 255h1v4h-1zM142 256h1v3h-1zM143 256h1v3h-1zM144 257h1v4h-1zM145 257h1v4h-1zM156 276h1v4h-1zM157 276h1v4h-1zM158 280h1v4h-1zM159 280h1v4h-1zM160 286h1v3h-1zM161 287h1v4h-1zM162 287h1v4h-1zM163 291h1v3h-1zM164 291h1v3h-1zM165 297h1v3h-1zM168 303h1v4h-1zM243 292h1v2h-1zM255 270h1v3h-1zM256 269h1v3h-1zM257 269h1v3h-1zM258 262h1v4h-1zM259 262h1v4h-1zM262 261h1v4h-1zM263 261h1v2h-1zM264 261h1v2h-1zM265 258h1v3h-1zM266 258h1v3h-1zM269 256h1v3h-1zM270 252h1v4h-1zM271 252h1v4h-1zM274 255h1v3h-1zM275 254h1v4h-1zM276 254h1v4h-1zM277 255h1v4h-1zM278 255h1v4h-1zM279 255h1v4h-1zM280 255h1v4h-1zM284 261h1v4h-1zM285 261h1v4h-1zM286 263h1v3h-1zM287 263h1v3h-1zM288 266h1v2h-1zM289 269h1v3h-1zM290 269h1v3h-1zM293 273h1v4h-1zM294 276h1v3h-1zM295 276h1v3h-1zM296 281h1v3h-1zM297 281h1v3h-1zM298 285h1v2h-1zM299 285h1v2h-1zM300 289h1v2h-1zM303 294h1v4h-1zM304 294h1v4h-1zM305 299h1v2h-1zM306 299h1v2h-1zM307 304h1v3h-1zM381 295h1v3h-1zM382 295h1v3h-1zM384 287h1v4h-1zM385 287h1v4h-1zM386 285h1v2h-1zM387 285h1v2h-1zM388 280h1v4h-1zM389 280h1v4h-1zM390 277h1v3h-1zM391 272h1v3h-1zM392 272h1v3h-1zM393 269h1v4h-1zM394 269h1v4h-1zM400 261h1v4h-1zM401 261h1v4h-1zM403 259h1v2h-1zM404 259h1v2h-1zM405 256h1v2h-1zM406 256h1v2h-1zM407 255h1v4h-1zM408 255h1v4h-1zM409 257h1v2h-1zM410 255h1v3h-1zM411 255h1v3h-1zM412 255h1v3h-1zM413 255h1v3h-1zM414 255h1v4h-1zM415 255h1v4h-1zM416 255h1v4h-1zM417 256h1v3h-1zM418 256h1v3h-1zM421 261h1v2h-1zM422 261h1v2h-1zM423 261h1v2h-1zM424 262h1v4h-1zM425 262h1v4h-1zM426 265h1v3h-1zM427 265h1v3h-1zM429 271h1v2h-1zM430 271h1v2h-1zM431 273h1v4h-1zM432 273h1v4h-1zM433 276h1v4h-1zM434 276h1v4h-1zM435 280h1v4h-1zM438 286h1v3h-1zM439 286h1v3h-1zM440 290h1v3h-1zM441 290h1v3h-1zM521 293h1v3h-1zM522 293h1v3h-1zM523 288h1v3h-1zM524 288h1v3h-1zM525 283h1v4h-1zM530 273h1v4h-1zM535 266h1v4h-1zM536 266h1v4h-1zM538 261h1v4h-1zM539 261h1v4h-1zM544 255h1v4h-1zM545 255h1v4h-1zM546 255h1v4h-1zM547 255h1v4h-1zM548 255h1v4h-1zM549 255h1v3h-1zM550 256h1v2h-1zM551 256h1v2h-1zM554 255h1v3h-1zM555 255h1v3h-1zM556 255h1v4h-1zM557 256h1v2h-1zM558 256h1v2h-1zM559 260h1v3h-1zM560 260h1v3h-1zM563 263h1v2h-1zM566 268h1v2h-1zM567 268h1v2h-1zM568 271h1v2h-1zM569 271h1v2h-1zM571 277h1v2h-1zM572 277h1v2h-1zM575 281h1v3h-1zM576 284h1v3h-1zM577 284h1v3h-1zM578 287h1v4h-1zM579 287h1v4h-1zM582 297h1v3h-1zM663 282h1v4h-1zM664 282h1v4h-1zM665 281h1v3h-1zM668 273h1v2h-1zM669 273h1v2h-1zM670 271h1v4h-1zM671 271h1v4h-1zM672 268h1v4h-1zM673 268h1v2h-1zM674 268h1v2h-1zM675 264h1v4h-1zM676 264h1v4h-1zM679 260h1v3h-1zM680 259h1v4h-1zM681 259h1v4h-1zM694 255h1v4h-1zM695 255h1v4h-1zM696 257h1v4h-1zM697 257h1v4h-1zM699 259h1v4h-1zM700 259h1v4h-1zM701 262h1v3h-1zM702 262h1v3h-1zM704 266h1v4h-1zM705 266h1v4h-1zM706 270h1v2h-1zM707 270h1v2h-1zM708 273h1v2h-1zM709 273h1v2h-1zM710 276h1v3h-1zM713 280h1v2h-1zM714 280h1v2h-1zM717 290h1v3h-1zM718 291h1v3h-1zM719 291h1v3h-1zM722 301h1v4h-1z" fill="#ff0000"/>
<path d="M31 572h1v1h-1zM32 572h1v1h-1zM33 573h1v1h-1zM34 574h1v1h-1zM35 574h1v1h-1zM36 574h1v1h-1zM37 574h1v1h-1zM38 574h1v1h-1zM39 574h1v1h-1zM40 574h1v1h-1zM41 574h1v1h-1zM42 574h1v1h-1zM43 574h1v1h-1zM44 574h1v1h-1zM45 574h1v1h-1zM46 574h1v1h-1zM47 574h1v1h-1zM48 574h1v1h-1zM49 574h1v1h-1zM50 574h1v1h-1zM51 574h1v1h-1zM52 574h1v1h-1zM53 574h1v1h-1zM54 574h1v1h-1zM55 574h1v1h-1zM56 574h1v1h-1zM57 574h1v1h-1zM58 574h1v1h-1zM59 574h1v1h-1zM60 574h1v1h-1zM61 574h1v1h-1zM62 574h1v1h-1zM63 574h1v1h-1zM64 574h1v1h-1zM65 574h1v1h-1zM66 574h1v1h-1zM67 574h1v1h-1zM68 574h1v1h-1zM69 574h1v1h-1zM70 574h1v1h-1zM71 574h1v1h-1zM72 574h1v1h-1zM73 574h1v1h-1zM74 574h1v1h-1zM75 574h1v1h-1zM76 574h1v1h-1zM77 574h1v1h-1zM78 574h1v1h-1zM79 574h1v1h-1zM80 574h1v1h-1zM81 574h1v1h-1zM82 574h1v1h-1zM83 574h1v1h-1zM84 574h1v1h-1zM85 574h1v1h-1zM86 574h1v1h-1zM87 574h1v1h-1zM88 574h1v1h-1zM89 574h1v1h-1zM90 574h1v1h-1zM91 574h1v1h-1zM92 574h1v1h-1zM93 574h1v1h-1zM94 574h1v1h-1zM95 574h1v1h-1zM96 574h1v1h-1zM97 574h1v1h-1zM98 574h1v1h-1zM99 574h1v1h-1zM100 458h1v116h-1zM101 458h1v1h-1zM102 458h1v1h-1zM103 458h1v1h-1zM104 458h1v1h-1zM105 458h1v1h-1zM106 458h1v1h-1zM107 458h1v1h-1zM108 458h1v1h-1zM109 458h1v1h-1zM110 458h1v1h-1zM111 458h1v1h-1zM112 458h1v1h-1zM113 458h1v1h-1zM114 458h1v1h-1zM115 458h1v1h-1zM116 458h1v1h-1zM117 458h1v1h-1zM118 458h1v1h-1zM119 458h1v1h-1zM120 458h1v1h-1zM121 458h1v1h-1zM122 458h1v1h-1zM123 458h1v1h-1zM124 458h1v1h-1zM125 458h1v1h-1zM126 458h1v1h-1zM127 458h1v1h-1zM128 458h1v1h-1zM129 458h1v1h-1zM130 458h1v1h-1zM131 458h1v1h-1zM132 458h1v1h-1zM133 458h1v1h-1zM134 458h1v1h-1zM135 458h1v1h-1zM136 458h1v1h-1zM137 458h1v1h-1zM138 458h1v1h-1zM139 458h1v1h-1zM140 458h1v1h-1zM141 458h1v1h-1zM142 458h1v1h-1zM143 458h1v1h-1zM144 458h1v1h-1zM145 458h1v1h-1zM146 458h1v1h-1zM147 458h1v1h-1zM148 458h1v1h-1zM149 458h1v1h-1zM150 458h1v1h-1zM151 458h1v1h-1zM152 458h1v1h-1zM153 458h1v1h-1zM154 458h1v1h-1zM155 458h1v1h-1zM156 458h1v1h-1zM157 458h1v1h-1zM158 458h1v1h-1zM159 458h1v1h-1zM160 458h1v1h-1zM161 458h1v1h-1zM162 458h1v1h-1zM163 458h1v1h-1zM164 458h1v1h-1zM165 458h1v1h-1zM166 458h1v1h-1zM167 458h1v1h-1zM168 458h1v1h-1zM169 459h1v114h-1zM170 572h1v1h-1zM171 573h1v2h-1zM172 574h1v1h-1zM173 574h1v1h-1zM174 574h1v1h-1zM175 574h1v1h-1zM176 574h1v1h-1zM177 574h1v1h-1zM178 574h1v1h-1zM179 574h1v1h-1zM180 574h1v1h-1zM181 574h1v1h-1zM182 574h1v1h-1zM183 574h1v1h-1zM184 574h1v1h-1zM185 574h1v1h-1zM186 574h1v1h-1zM187 574h1v1h-1zM188 574h1v1h-1zM189 574h1v1h-1zM190 574h1v1h-1zM191 574h1v1h-1zM192 574h1v1h-1zM193 574h1v1h-1zM194 574h1v1h-1zM195 574h1v1h-1zM196 574h1v1h-1zM197 574h1v1h-1zM198 574h1v1h-1zM199 574h1v1h-1zM200 574h1v1h-1zM201 574h1v1h-1zM202 574h1v1h-1zM203 574h1v1h-1zM204 574h1v1h-1zM205 574h1v1h-1zM206 574h1v1h-1zM207 574h1v1h-1zM208 574h1v1h-1zM209 574h1v1h-1zM210 574h1v1h-1zM211 574h1v1h-1zM212 574h1v1h-1zM213 574h1v1h-1zM214 574h1v1h-1zM215 574h1v1h-1zM216 574h1v1h-1zM217 574h1v1h-1zM218 574h1v1h-1zM219 574h1v1h-1zM220 574h1v1h-1zM221 574h1v1h-1zM222 574h1v1h-1zM223 574h1v1h-1zM224 574h1v1h-1zM225 574h1v1h-1zM226 574h1v1h-1zM227 574h1v1h-1zM228 574h1v1h-1zM229 574h1v1h-1zM230 574h1v1h-1zM231 574h1v1h-1zM232 574h1v1h-1zM233 574h1v1h-1zM234 574h1v1h-1zM235 574h1v1h-1zM236 574h1v1h-1zM237 574h1v1h-1zM238 574h1v1h-1zM239 458h1v116h-1zM240 458h1v1h-1zM241 458h1v1h-1zM242 458h1v1h-1zM243 458h1v1h-1zM244 458h1v1h-1zM245 458h1v1h-1zM246 458h1v1h-1zM247 458h1v1h-1zM248 458h1v1h-1zM249 458h1v1h-1zM250 458h1v1h-1zM251 458h1v1h-1zM252 458h1v1h-1zM253 458h1v1h-1zM254 458h1v1h-1zM255 458h1v1h-1zM256 458h1v1h-1zM257 458h1v1h-1zM258 458h1v1h-1zM259 458h1v1h-1zM260 458h1v1h-1zM261 458h1v1h-1zM262 458h1v1h-1zM263 458h1v1h-1zM264 458h1v1h-1zM265 458h1v1h-1zM266 458h1v1h-1zM267 458h1v1h-1zM268 458h1v1h-1zM269 458h1v1h-1zM270 458h1v1h-1zM271 458h1v1h-1zM272 458h1v1h-1zM273 458h1v1h-1zM274 458h1v1h-1zM275 458h1v1h-1zM276 458h1v1h-1zM277 458h1v1h-1zM278 458h1v1h-1zM279 458h1v1h-1zM280 458h1v1h-1zM281 458h1v1h-1zM282 458h1v1h-1zM283 458h1v1h-1zM284 458h1v1h-1zM285 458h1v1h-1zM286 458h1v1h-1zM287 458h1v1h-1zM288 458h1v1h-1zM289 458h1v1h-1zM290 458h1v1h-1zM291 458h1v1h-1zM292 458h1v1h-1zM293 458h1v1h-1zM294 458h1v1h-1zM295 458h1v1h-1zM296 458h1v1h-1zM297 458h1v1h-1zM298 458h1v1h-1zM299 458h1v1h-1zM300 458h1v1h-1zM301 458h1v1h-1zM302 458h1v1h-1zM303 458h1v1h-1zM304 458h1v1h-1zM305 458h1v1h-1zM306 458h1v1h-1zM307 458h1v1h-1zM308 459h1v114h-1zM309 572h1v1h-1zM310 573h1v2h-1zM311 574h1v1h-1zM312 574h1v1h-1zM313 574h1v1h-1zM314 574h1v1h-1zM315 574h1v1h-1zM316 574h1v1h-1zM317 574h1v1h-1zM318 574h1v1h-1zM319 574h1v1h-1zM320 574h1v1h-1zM321 574h1v1h-1zM322 574h1v1h-1zM323 574h1v1h-1zM324 574h1v1h-1zM325 574h1v1h-1zM326 574h1v1h-1zM327 574h1v1h-1zM328 574h1v1h-1zM329 574h1v1h-1zM330 574h1v1h-1zM331 574h1v1h-1zM332 574h1v1h-1zM333 574h1v1h-1zM334 574h1v1h-1zM335 574h1v1h-1zM336 574h1v1h-1zM337 574h1v1h-1zM338 574h1v1h-1zM339 574h1v1h-1zM340 574h1v1h-1zM341 574h1v1h-1zM342 574h1v1h-1zM343 574h1v1h-1zM344 574h1v1h-1zM345 574h1v1h-1zM346 574h1v1h-1zM347 574h1v1h-1zM348 574h1v1h-1zM349 574h1v1h-1zM350 574h1v1h-1zM351 574h1v1h-1zM352 574h1v1h-1zM353 574h1v1h-1zM354 574h1v1h-1zM355 574h1v1h-1zM356 574h1v1h-1zM357 574h1v1h-1zM358 574h1v1h-1zM359 574h1v1h-1zM360 574h1v1h-1zM361 574h1v1h-1zM362 574h1v1h-1zM363 574h1v1h-1zM364 574h1v1h-1zM365 574h1v1h-1zM366 574h1v1h-1zM367 574h1v1h-1zM368 574h1v1h-1zM369 574h1v1h-1zM370 574h1v1h-1zM371 574h1v1h-1zM372 574h1v1h-1zM373 574h1v1h-1zM374 574h1v1h-1zM375 574h1v1h-1zM376 574h1v1h-1zM377 458h1v116h-1zM378 458h1v1h-1zM379 458h1v1h-1zM380 458h1v1h-1zM381 458h1v1h-1zM382 458h1v1h-1zM383 458h1v1h-1zM384 458h1v1h-1zM385 458h1v1h-1zM386 458h1v1h-1zM387 458h1v1h-1zM388 458h1v1h-1zM389 458h1v1h-1zM390 458h1v1h-1zM391 458h1v1h-1zM392 458h1v1h-1zM393 458h1v1h-1zM394 458h1v1h-1zM395 458h1v1h-1zM396 458h1v1h-1zM397 458h1v1h-1zM398 458h1v1h-1zM399 458h1v1h-1zM400 458h1v1h-1zM401 458h1v1h-1zM402 458h1v1h-1zM403 458h1v1h-1zM404 458h1v1h-1zM405 458h1v1h-1zM406 458h1v1h-1zM407 458h1v1h-1zM408 458h1v1h-1zM409 458h1v1h-1zM410 458h1v1h-1zM411 458h1v1h-1zM412 458h1v1h-1zM413 458h1v1h-1zM414 458h1v1h-1zM415 458h1v1h-1zM416 458h1v1h-1zM417 458h1v1h-1zM418 458h1v1h-1zM419 458h1v1h-1zM420 458h1v1h-1zM421 458h1v1h-1zM422 458h1v1h-1zM423 458h1v1h-1zM424 458h1v1h-1zM425 458h1v1h-1zM426 458h1v1h-1zM427 458h1v1h-1zM428 458h1v1h-1zM429 458h1v1h-1zM430 458h1v1h-1zM431 458h1v1h-1zM432 458h1v1h-1zM433 458h1v1h-1zM434 458h1v1h-1zM435 458h1v1h-1zM436 458h1v1h-1zM437 458h1v1h-1zM438 458h1v1h-1zM439 458h1v1h-1zM440 458h1v1h-1zM441 458h1v1h-1zM442 458h1v1h-1zM443 458h1v1h-1zM444 458h1v1h-1zM445 458h1v1h-1zM446 458h1v1h-1zM447 459h1v114h-1zM448 572h1v1h-1zM449 573h1v2h-1zM450 574h1v1h-1zM451 574h1v1h-1zM452 574h1v1h-1zM453 574h1v1h-1zM454 574h1v1h-1zM455 574h1v1h-1zM456 574h1v1h-1zM457 574h1v1h-1zM458 574h1v1h-1zM459 574h1v1h-1zM460 574h1v1h-1zM461 574h1v1h-1zM462 574h1v1h-1zM463 574h1v1h-1zM464 574h1v1h-1zM465 574h1v1h-1zM466 574h1v1h-1zM467 574h1v1h-1zM468 574h1v1h-1zM469 574h1v1h-1zM470 574h1v1h-1zM471 574h1v1h-1zM472 574h1v1h-1zM473 574h1v1h-1zM474 574h1v1h-1zM475 574h1v1h-1zM476 574h1v1h-1zM477 574h1v1h-1zM478 574h1v1h-1zM479 574h1v1h-1zM480 574h1v1h-1zM481 574h1v1h-1zM482 574h1v1h-1zM483 574h1v1h-1zM484 574h1v1h-1zM485 574h1v1h-1zM486 574h1v1h-1zM487 574h1v1h-1zM488 574h1v1h-1zM489 574h1v1h-1zM490 574h1v1h-1zM491 574h1v1h-1zM492 574h1v1h-1zM493 574h1v1h-1zM494 574h1v1h-1zM495 574h1v1h-1zM496 574h1v1h-1zM497 574h1v1h-1zM498 574h1v1h-1zM499 574h1v1h-1zM500 574h1v1h-1zM501 574h1v1h-1zM502 574h1v1h-1zM503 574h1v1h-1zM504 574h1v1h-1zM505 574h1v1h-1zM506 574h1v1h-1zM507 574h1v1h-1zM508 574h1v1h-1zM509 574h1v1h-1zM510 574h1v1h-1zM511 574h1v1h-1zM512 574h1v1h-1zM513 574h1v1h-1zM514 574h1v1h-1zM515 574h1v1h-1zM516 458h1v116h-1zM517 458h1v1h-1zM518 458h1v1h-1zM519 458h1v1h-1zM520 458h1v1h-1zM521 458h1v1h-1zM522 458h1v1h-1zM523 458h1v1h-1zM524 458h1v1h-1zM525 458h1v1h-1zM526 458h1v1h-1zM527 458h1v1h-1zM528 458h1v1h-1zM529 458h1v1h-1zM530 458h1v1h-1zM531 458h1v1h-1zM532 458h1v1h-1zM533 458h1v1h-1zM534 458h1v1h-1zM535 458h1v1h-1zM536 458h1v1h-1zM537 458h1v1h-1zM538 458h1v1h-1zM539 458h1v1h-1zM540 458h1v1h-1zM541 458h1v1h-1zM542 458h1v1h-1zM543 458h1v1h-1zM544 458h1v1h-1zM545 458h1v1h-1zM546 458h1v1h-1zM547 458h1v1h-1zM548 458h1v1h-1zM549 458h1v1h-1zM550 458h1v1h-1zM551 458h1v1h-1zM552 458h1v1h-1zM553 458h1v1h-1zM554 458h1v1h-1zM555 458h1v1h-1zM556 458h1v1h-1zM557 458h1v1h-1zM558 458h1v1h-1zM559 458h1v1h-1zM560 458h1v1h-1zM561 458h1v1h-1zM562 458h1v1h-1zM563 458h1v1h-1zM564 458h1v1h-1zM565 458h1v1h-1zM566 458h1v1h-1zM567 458h1v1h-1zM568 458h1v1h-1zM569 458h1v1h-1zM570 458h1v1h-1zM571 458h1v1h-1zM572 458h1v1h-1zM573 458h1v1h-1zM574 458h1v1h-1zM575 458h1v1h-1zM576 458h1v1h-1zM577 458h1v1h-1zM578 458h1v1h-1zM579 458h1v1h-1zM580 458h1v1h-1zM581 458h1v1h-1zM582 458h1v1h-1zM583 458h1v1h-1zM584 458h1v1h-1zM585 459h1v114h-1zM586 572h1v1h-1zM587 573h1v2h-1zM588 574h1v1h-1zM589 574h1v1h-1zM590 574h1v1h-1zM591 574h1v1h-1zM592 574h1v1h-1zM593 574h1v1h-1zM594 574h1v1h-1zM595 574h1v1h-1zM596 574h1v1h-1zM597 574h1v1h-1zM598 574h1v1h-1zM599 574h1v1h-1zM600 574h1v1h-1zM601 574h1v1h-1zM602 574h1v1h-1zM603 574h1v1h-1zM604 574h1v1h-1zM605 574h1v1h-1zM606 574h1v1h-1zM607 574h1v1h-1zM608 574h1v1h-1zM609 574h1v1h-1zM610 574h1v1h-1zM611 574h1v1h-1zM612 574h1v1h-1zM613 574h1v1h-1zM614 574h1v1h-1zM615 574h1v1h-1zM616 574h1v1h-1zM617 574h1v1h-1zM618 574h1v1h-1zM619 574h1v1h-1zM620 574h1v1h-1zM621 574h1v1h-1zM622 574h1v1h-1zM623 574h1v1h-1zM624 574h1v1h-1zM625 574h1v1h-1zM626 574h1v1h-1zM627 574h1v1h-1zM628 574h1v1h-1zM629 574h1v1h-1zM630 574h1v1h-1zM631 574h1v1h-1zM632 574h1v1h-1zM633 574h1v1h-1zM634 574h1v1h-1zM635 574h1v1h-1zM636 574h1v1h-1zM637 574h1v1h-1zM638 574h1v1h-1zM639 574h1v1h-1zM640 574h1v1h-1zM641 574h1v1h-1zM642 574h1v1h-1zM643 574h1v1h-1zM644 574h1v1h-1zM645 574h1v1h-1zM646 574h1v1h-1zM647 574h1v1h-1zM648 574h1v1h-1zM649 574h1v1h-1zM650 574h1v1h-1zM651 574h1v1h-1zM652 574h1v1h-1zM653 574h1v1h-1zM654 574h1v1h-1zM655 458h1v116h-1zM656 458h1v1h-1zM657 458h1v1h-1zM658 458h1v1h-1zM659 458h1v1h-1zM660 458h1v1h-1zM661 458h1v1h-1zM662 458h1v1h-1zM663 458h1v1h-1zM664 458h1v1h-1zM665 458h1v1h-1zM666 458h1v1h-1zM667 458h1v1h-1zM668 458h1v1h-1zM669 458h1v1h-1zM670 458h1v1h-1zM671 458h1v1h-1zM672 458h1v1h-1zM673 458h1v1h-1zM674 458h1v1h-1zM675 458h1v1h-1zM676 458h1v1h-1zM677 458h1v1h-1zM678 458h1v1h-1zM679 458h1v1h-1zM680 458h1v1h-1zM681 458h1v1h-1zM682 458h1v1h-1zM683 458h1v1h-1zM684 458h1v1h-1zM685 458h1v1h-1zM686 458h1v1h-1zM687 458h1v1h-1zM688 458h1v1h-1zM689 458h1v1h-1zM690 458h1v1h-1zM691 458h1v1h-1zM692 458h1v1h-1zM693 458h1v1h-1zM694 458h1v1h-1zM695 458h1v1h-1zM696 458h1v1h-1zM697 458h1v1h-1zM698 458h1v1h-1zM699 458h1v1h-1zM700 458h1v1h-1zM701 458h1v1h-1zM702 458h1v1h-1zM703 458h1v1h-1zM704 458h1v1h-1zM705 458h1v1h-1zM706 458h1v1h-1zM707 458h1v1h-1zM708 458h1v1h-1zM709 458h1v1h-1zM710 458h1v1h-1zM711 458h1v1h-1zM712 458h1v1h-1zM713 458h1v1h-1zM714 458h1v1h-1zM715 458h1v1h-1zM716 458h1v1h-1zM717 458h1v1h-1zM718 458h1v1h-1zM719 458h1v1h-1zM720 458h1v1h-1zM721 458h1v1h-1zM722 458h1v1h-1zM723 458h1v1h-1zM103 455h1v3h-1zM104 455h1v3h-1zM105 455h1v3h-1zM106 457h1v1h-1zM107 457h1v1h-1zM108 455h1v3h-1zM109 457h1v1h-1zM111 455h1v3h-1zM112 455h1v3h-1zM113 455h1v3h-1zM115 457h1v1h-1zM116 455h1v3h-1zM117 457h1v1h-1zM118 455h1v3h-1zM120 455h1v3h-1zM121 455h1v3h-1zM122 455h1v3h-1zM123 455h1v3h-1zM124 455h1v3h-1zM125 455h1v3h-1zM126 455h1v3h-1zM127 457h1v1h-1zM128 455h1v3h-1zM129 455h1v3h-1zM130 457h1v1h-1zM131 455h1v3h-1zM132 455h1v3h-1zM133 455h1v3h-1zM134 455h1v3h-1zM137 455h1v3h-1zM138 455h1v3h-1zM139 457h1v1h-1zM140 455h1v3h-1zM142 455h1v3h-1zM143 455h1v3h-1zM144 455h1v3h-1zM145 457h1v1h-1zM146 455h1v3h-1zM147 457h1v1h-1zM148 457h1v1h-1zM149 455h1v3h-1zM150 455h1v3h-1zM151 457h1v1h-1zM152 457h1v1h-1zM153 455h1v3h-1zM155 455h1v3h-1zM156 457h1v1h-1zM157 455h1v3h-1zM158 457h1v1h-1zM159 455h1v3h-1zM160 455h1v3h-1zM161 457h1v1h-1zM162 457h1v1h-1zM163 457h1v1h-1zM164 455h1v3h-1zM165 455h1v3h-1zM166 455h1v3h-1zM167 455h1v3h-1zM168 455h1v3h-1zM242 455h1v3h-1zM244 455h1v3h-1zM245 455h1v3h-1zM246 455h1v3h-1zM247 455h1v3h-1zM248 455h1v3h-1zM249 455h1v3h-1zM250 455h1v3h-1zM251 457h1v1h-1zM252 455h1v3h-1zM254 455h1v3h-1zM255 455h1v3h-1zM256 457h1v1h-1zM257 455h1v3h-1zM258 455h1v3h-1zM259 455h1v3h-1zM260 455h1v3h-1zM261 455h1v3h-1zM262 457h1v1h-1zM263 455h1v3h-1zM264 455h1v3h-1zM265 455h1v3h-1zM266 455h1v3h-1zM267 457h1v1h-1zM268 455h1v3h-1zM269 455h1v3h-1zM270 455h1v3h-1zM271 457h1v1h-1zM272 457h1v1h-1zM273 457h1v1h-1zM274 455h1v3h-1zM275 455h1v3h-1zM276 455h1v3h-1zM277 455h1v3h-1zM279 455h1v3h-1zM280 455h1v3h-1zM281 457h1v1h-1zM283 455h1v3h-1zM284 455h1v3h-1zM285 457h1v1h-1zM286 455h1v3h-1zM287 455h1v3h-1zM289 455h1v3h-1zM290 455h1v3h-1zM291 455h1v3h-1zM292 455h1v3h-1zM293 455h1v3h-1zM294 455h1v3h-1zM296 457h1v1h-1zM297 457h1v1h-1zM298 455h1v3h-1zM299 455h1v3h-1zM300 455h1v3h-1zM301 455h1v3h-1zM302 455h1v3h-1zM304 455h1v3h-1zM305 455h1v3h-1zM307 457h1v1h-1zM381 455h1v3h-1zM382 457h1v1h-1zM384 455h1v3h-1zM386 455h1v3h-1zM387 455h1v3h-1zM388 457h1v1h-1zM389 455h1v3h-1zM390 457h1v1h-1zM391 455h1v3h-1zM392 455h1v3h-1zM393 455h1v3h-1zM394 455h1v3h-1zM395 455h1v3h-1zM396 455h1v3h-1zM397 455h1v3h-1zM398 455h1v3h-1zM399 455h1v3h-1zM400 455h1v3h-1zM402 457h1v1h-1zM404 455h1v3h-1zM405 455h1v3h-1zM406 455h1v3h-1zM407 457h1v1h-1zM408 455h1v3h-1zM409 455h1v3h-1zM410 455h1v3h-1zM411 455h1v3h-1zM412 455h1v3h-1zM413 455h1v3h-1zM415 457h1v1h-1zM416 455h1v3h-1zM417 455h1v3h-1zM418 455h1v3h-1zM420 455h1v3h-1zM421 457h1v1h-1zM422 457h1v1h-1zM424 455h1v3h-1zM425 455h1v3h-1zM426 455h1v3h-1zM427 455h1v3h-1zM429 455h1v3h-1zM430 457h1v1h-1zM431 455h1v3h-1zM432 455h1v3h-1zM433 455h1v3h-1zM434 455h1v3h-1zM435 455h1v3h-1zM436 455h1v3h-1zM437 455h1v3h-1zM438 455h1v3h-1zM439 455h1v3h-1zM440 455h1v3h-1zM441 455h1v3h-1zM442 455h1v3h-1zM443 457h1v1h-1zM444 455h1v3h-1zM445 457h1v1h-1zM446 457h1v1h-1zM519 457h1v1h-1zM520 455h1v3h-1zM521 455h1v3h-1zM523 455h1v3h-1zM524 455h1v3h-1zM525 455h1v3h-1zM526 455h1v3h-1zM527 455h1v3h-1zM528 455h1v3h-1zM529 457h1v1h-1zM530 455h1v3h-1zM531 457h1v1h-1zM533 455h1v3h-1zM534 457h1v1h-1zM536 455h1v3h-1zM537 457h1v1h-1zM538 457h1v1h-1zM541 455h1v3h-1zM542 457h1v1h-1zM543 455h1v3h-1zM544 455h1v3h-1zM545 455h1v3h-1zM546 455h1v3h-1zM547 455h1v3h-1zM548 455h1v3h-1zM549 455h1v3h-1zM550 455h1v3h-1zM551 455h1v3h-1zM552 455h1v3h-1zM553 455h1v3h-1zM554 455h1v3h-1zM555 457h1v1h-1zM556 455h1v3h-1zM557 455h1v3h-1zM558 455h1v3h-1zM559 455h1v3h-1zM560 455h1v3h-1zM561 455h1v3h-1zM562 457h1v1h-1zM563 455h1v3h-1zM564 457h1v1h-1zM565 455h1v3h-1zM566 455h1v3h-1zM567 455h1v3h-1zM568 455h1v3h-1zM569 455h1v3h-1zM570 455h1v3h-1zM571 455h1v3h-1zM572 455h1v3h-1zM573 455h1v3h-1zM574 455h1v3h-1zM575 455h1v3h-1zM576 455h1v3h-1zM577 455h1v3h-1zM579 455h1v3h-1zM580 455h1v3h-1zM581 457h1v1h-1zM582 455h1v3h-1zM583 455h1v3h-1zM584 457h1v1h-1zM659 457h1v1h-1zM660 457h1v1h-1zM661 457h1v1h-1zM662 455h1v3h-1zM663 455h1v3h-1zM664 455h1v3h-1zM665 457h1v1h-1zM667 455h1v3h-1zM669 455h1v3h-1zM670 455h1v3h-1zM671 455h1v3h-1zM672 455h1v3h-1zM673 455h1v3h-1zM675 455h1v3h-1zM676 455h1v3h-1zM677 455h1v3h-1zM678 457h1v1h-1zM679 455h1v3h-1zM680 455h1v3h-1zM681 455h1v3h-1zM682 455h1v3h-1zM683 455h1v3h-1zM684 455h1v3h-1zM685 457h1v1h-1zM686 455h1v3h-1zM687 457h1v1h-1zM688 455h1v3h-1zM689 457h1v1h-1zM691 455h1v3h-1zM692 455h1v3h-1zM694 455h1v3h-1zM695 457h1v1h-1zM696 457h1v1h-1zM697 457h1v1h-1zM699 457h1v1h-1zM700 455h1v3h-1zM701 457h1v1h-1zM702 455h1v3h-1zM703 455h1v3h-1zM704 455h1v3h-1zM705 455h1v3h-1zM706 457h1v1h-1zM707 455h1v3h-1zM708 455h1v3h-1zM709 455h1v3h-1zM710 455h1v3h-1zM711 455h1v3h-1zM712 455h1v3h-1zM713 455h1v3h-1zM714 455h1v3h-1zM715 455h1v3h-1zM716 455h1v3h-1zM717 457h1v1h-1zM718 455h1v3h-1zM719 455h1v3h-1zM720 457h1v1h-1zM721 455h1v3h-1zM722 455h1v3h-1z" fill="#00ffff"/>
</svg>
<svg class="abs" style="left:9px;top:93px" width="737" height="524" viewBox="9 93 737 524">
<path d="M372 122h11v9.500l-5.500 5.500-5.500-5.500z" fill="#ff8000" stroke="#a05000" stroke-width=".6"/>
<path d="M12 205.0h12l5 5.500-5 5.500h-12z" fill="#ffff00"/>
<path d="M12 359.0h12l5 5.500-5 5.500h-12z" fill="#ff0000"/>
<path d="M12 507.0h12l5 5.500-5 5.500h-12z" fill="#00ffff"/>
<path d="M743 216v11h-12l-5-5.500 5-5.500z" fill="#ffff00"/>
<rect x="31" y="594" width="92" height="19" fill="#000"/><rect x="33" y="596" width="27" height="15" fill="#ffff00"/>
<rect x="141" y="594" width="92" height="19" fill="#000"/>
<rect x="633" y="594" width="90" height="19" fill="#000"/>
<path d="M61.500 604.500q2-4 4 0t4 0" fill="none" stroke="#ffff00" stroke-width="1"/>
<path d="M171.500 604.500q2-4 4 0t4 0" fill="none" stroke="#00ffff" stroke-width="1"/>
</svg>
<div class="st" style="left:374px;top:122.500px;font-size:10.500px;line-height:12px;color:#000">T</div>
<div class="st" style="left:16.500px;top:204.500px;font-size:10.500px;line-height:12px;color:#000">1</div>
<div class="st" style="left:13.500px;top:358.500px;font-size:10.500px;line-height:12px;color:#000">M</div>
<div class="st" style="left:15.500px;top:506.500px;font-size:10.500px;line-height:12px;color:#000">2</div>
<div class="st" style="left:734px;top:215.500px;font-size:10.500px;line-height:12px;color:#000">T</div>
<div class="st" style="left:645px;top:153px;height:15px;line-height:16px;width:69px;padding-left:1px;box-sizing:border-box;background:#000;font-weight:bold;color:#00e8e8">1.00000KHz</div>
<div class="st" style="left:33.500px;top:597px;color:#000">CH1</div>
<div class="st" style="left:76.500px;top:597px;color:#ffff00">500mV</div>
<div class="st" style="left:143.500px;top:597px;color:#00ffff">CH2</div>
<div class="st" style="left:186.500px;top:597px;color:#00ffff">500mV</div>
<div class="st" style="left:635.300px;top:597px;color:#ff8000">Time: 500.0us</div>
<div id="rp" class="abs"></div>
<div class="abs" style="left:744px;top:91px;width:2px;height:527px;background:#fff"></div>
<div class="abs" style="left:8px;top:616px;width:738px;height:2px;background:#fff"></div>
<div class="cj" style="left:773px;top:100px">联机:</div>
<div class="abs" style="left:804px;top:97px;width:19px;height:19px;border-radius:50%;background:#ff8000;border:1px solid #7c4a14"></div>
<div class="abs" style="left:746px;top:121px;width:192px;height:497px;box-sizing:border-box;border-left:1px solid #868b9a;border-top:1px solid #868b9a;box-shadow:inset 1px 1px 0 #fff"></div>
<div class="grp" style="left:753px;top:134px;width:165px;height:108px"></div>
<div class="grp" style="left:753px;top:258px;width:165px;height:148px"></div>
<div class="grp" style="left:753px;top:421px;width:165px;height:210px;border-bottom:none"></div>
<div class="cj" style="left:758px;top:126px;background:#f0f0f0;padding:0 3px">水平</div>
<div class="cj" style="left:758px;top:251px;background:#f0f0f0;padding:0 3px">垂直</div>
<div class="cj" style="left:757px;top:414px;background:#f0f0f0;padding:0 3px">触发</div>
<div class="cj" style="left:755px;top:147px">秒 / 格</div>
<div class="combo " style="left:755px;top:166px"><span>500.0us</span><i></i></div>
<div class="cj" style="left:755px;top:195px">格式</div>
<div class="combo " style="left:755px;top:215px"><span>Y - T</span><i></i></div>
<div class="combo " style="left:755px;top:274px"><span>CH1</span><i></i></div>
<div class="abs" style="left:828px;top:276px;width:11px;height:11px;border:1px solid #8e8f8f;background:linear-gradient(135deg,#d8dce2,#fff);box-shadow:inset 0 0 0 1px #f0f0f0"></div>
<svg class="abs" style="left:828px;top:276px" width="13" height="13" viewBox="0 0 13 13"><path d="M3 6l2.500 3.500L9.800 2.800" fill="none" stroke="#3a5cb0" stroke-width="1.800"/></svg>
<div class="cj" style="left:844px;top:277px">开/关</div>
<div class="abs" style="left:755px;top:302px;width:66px;height:19px;border:1px solid #e3e9ef;border-top-color:#d0d4da;background:#fbfbfb"></div>
<div class="abs" style="left:759px;top:302px;font-size:11px;line-height:21px">500mV</div>
<div class="abs" style="left:806px;top:303px;width:15px;height:9px;border:1px solid #c0c4ca;box-sizing:border-box;background:linear-gradient(#f6f6f6,#dcdcdc)"></div>
<div class="abs" style="left:806px;top:312px;width:15px;height:9px;border:1px solid #c0c4ca;box-sizing:border-box;background:linear-gradient(#f6f6f6,#dcdcdc)"></div>
<svg class="abs" style="left:806px;top:303px" width="15" height="18" viewBox="0 0 15 18"><path d="M4.500 6l3-3 3 3zM4.500 12l3 3 3-3z" fill="#4a5c90"/></svg>
<div class="combo cjc" style="left:755px;top:329px"><span>交流</span><i></i></div>
<div class="combo " style="left:755px;top:357px"><span>x1</span><i></i></div>
<div class="cj" style="left:754px;top:439.5px">触发模式</div>
<div class="combo cjc" style="left:842px;top:435px"><span>边沿</span><i></i></div>
<div class="cj" style="left:754px;top:469.5px">触发方式</div>
<div class="combo cjc" style="left:842px;top:465px"><span>自动</span><i></i></div>
<div class="cj" style="left:754px;top:499.5px">触发信源</div>
<div class="combo " style="left:842px;top:495px"><span>CH1</span><i></i></div>
<div class="cj" style="left:754px;top:529.5px">边沿类型</div>
<div class="combo " style="left:843px;top:526px"><span>+</span><i></i></div>
<svg class="abs" style="left:829.1px;top:156.8px" width="84" height="84" viewBox="829.1 156.8 84 84">
<defs><linearGradient id="kr0000cc" x1=".15" y1=".1" x2=".85" y2=".9"><stop offset="0" stop-color="#cfcfcf"/><stop offset=".5" stop-color="#a4a4a4"/><stop offset="1" stop-color="#7a7a7a"/></linearGradient></defs>
<path d="M844.3000000000001 225.8A38.100 38.100 0 1 1 897.9 225.8" fill="none" stroke="#333" stroke-width="1"/>
<path d="M846.2 223.70000000000002l-6.900 6M896.0 223.70000000000002l6.900 6" stroke="#111" stroke-width="1.300"/>
<circle cx="871.1" cy="198.8" r="37.200" fill="#fff"/>
<circle cx="871.1" cy="198.8" r="35.600" fill="url(#kr0000cc)" stroke="#6e6e6e" stroke-width=".8"/>
<circle cx="871.1" cy="198.8" r="29" fill="#00008c"/>
<circle cx="871.1" cy="198.8" r="27" fill="#0000cc"/>
<path d="M872.6 191.6L876.0 175.9" stroke="#f0e8b0" stroke-width="1.600"/>
</svg>
<svg class="abs" style="left:830.1px;top:296.7px" width="84" height="84" viewBox="830.1 296.7 84 84">
<defs><linearGradient id="krffff00" x1=".15" y1=".1" x2=".85" y2=".9"><stop offset="0" stop-color="#cfcfcf"/><stop offset=".5" stop-color="#a4a4a4"/><stop offset="1" stop-color="#7a7a7a"/></linearGradient></defs>
<path d="M845.3000000000001 365.7A38.100 38.100 0 1 1 898.9 365.7" fill="none" stroke="#333" stroke-width="1"/>
<path d="M847.2 363.59999999999997l-6.900 6M897.0 363.59999999999997l6.900 6" stroke="#111" stroke-width="1.300"/>
<circle cx="872.1" cy="338.7" r="37.200" fill="#fff"/>
<circle cx="872.1" cy="338.7" r="35.600" fill="url(#krffff00)" stroke="#6e6e6e" stroke-width=".8"/>
<circle cx="872.1" cy="338.7" r="29" fill="#8c8c00"/>
<circle cx="872.1" cy="338.7" r="27" fill="#ffff00"/>
<path d="M867.6 332.8L857.9 320.1" stroke="#e8e8c0" stroke-width="1.600"/>
</svg>
<div class="abs" style="left:925px;top:122px;width:13px;height:495px;background:linear-gradient(90deg,#e9e9eb,#f4f4f5 40%,#f0f0f0)"></div>
<svg class="abs" style="left:925px;top:122px" width="13" height="18" viewBox="0 0 13 18"><path d="M3.500 10.500l3.500-4 3.500 4z" fill="#3a3a3a"/></svg>
<div class="abs" style="left:925px;top:140px;width:12px;height:294px;border:1px solid #979797;border-radius:2px;box-sizing:content-box;width:11px;background:linear-gradient(90deg,#f6f6f6 0,#ebebec 45%,#d2d2d6 55%,#c4c4ca 100%)"></div>
<div class="abs" style="left:928px;top:284px;width:7px;height:7px;background:repeating-linear-gradient(#6f6f78 0,#6f6f78 1px,transparent 1px,transparent 3px)"></div>
<div id="status" class="abs"></div>
<div class="cj" style="left:10px;top:621px">已连接</div>
<div class="abs" style="left:810px;top:621px;width:1px;height:15px;background:#d0d0d0"></div>
<div class="abs" style="left:815px;top:621px;width:103px;overflow:hidden;font-size:13px;line-height:15px;white-space:pre">19-02-2016  13:40</div>
<svg class="abs" style="left:924px;top:624px" width="13" height="13" viewBox="0 0 13 13"><path d="M9 3h2v2h-2zM9 6.500h2v2h-2zM9 10h2v2h-2zM5.500 6.500h2v2h-2zM5.500 10h2v2h-2zM2 10h2v2h-2z" fill="#b8b8b8"/></svg>
</body>
</html>
